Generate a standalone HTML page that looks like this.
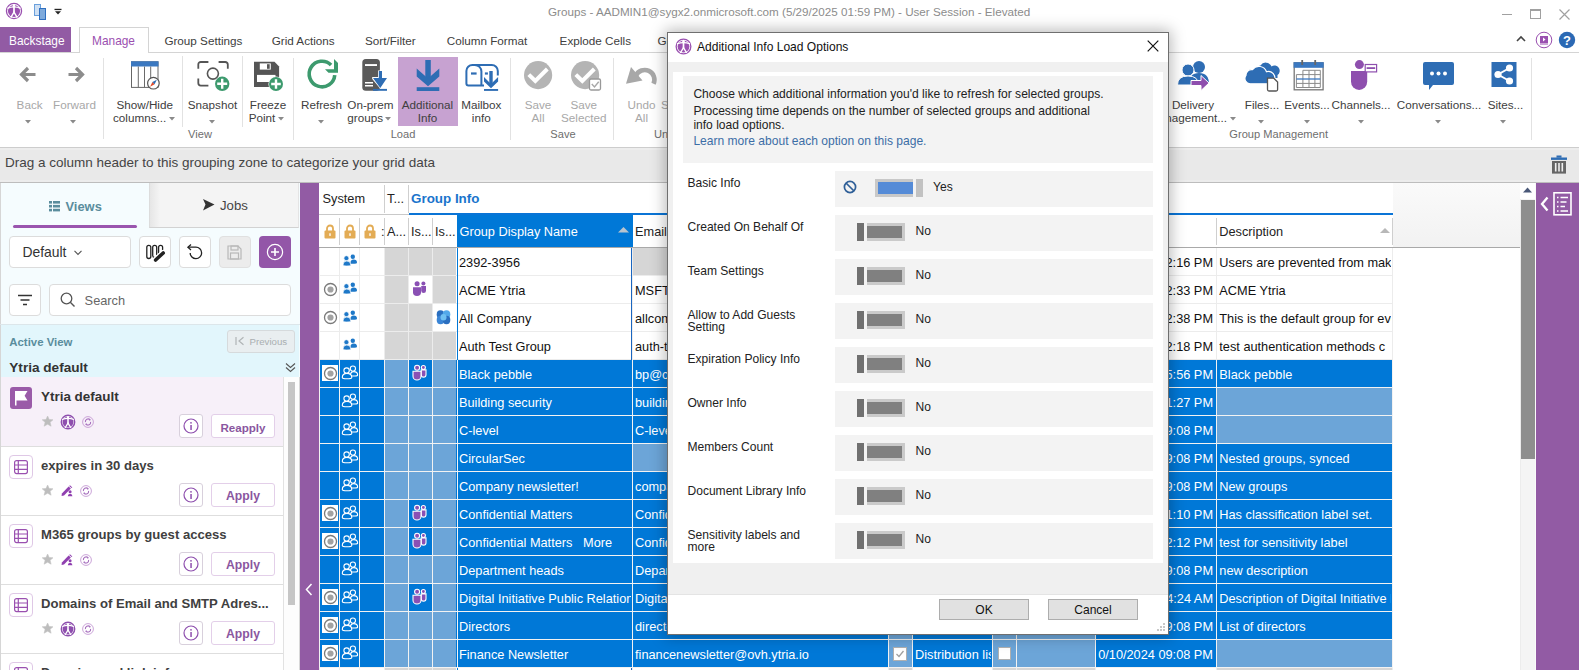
<!DOCTYPE html><html><head><meta charset="utf-8"><style>
html,body{margin:0;padding:0}
body{width:1579px;height:670px;overflow:hidden;position:relative;background:#fff;font-family:"Liberation Sans", sans-serif}
.t{position:absolute;white-space:nowrap;line-height:1}
.b{position:absolute;box-sizing:border-box}
svg.b{overflow:visible}
</style></head><body>
<svg class="b" style="left:5px;top:2px" width="18" height="18" viewBox="0 0 18 18"><circle cx="9" cy="9" r="7.55" fill="none" stroke="#9a50b0" stroke-width="1.3"/><circle cx="9" cy="9" r="6.05" fill="#9a50b0"/><path d="M9.00 2.34 L9.00 10.85" stroke="#fff" stroke-width="1.74"/><path d="M5.72 15.66 L9.00 10.23 L12.28 15.66" fill="none" stroke="#fff" stroke-width="1.43"/><path d="M2.34 6.33 Q9.00 3.67 15.66 6.33" fill="none" stroke="#fff" stroke-width="1.23"/><circle cx="9" cy="4.29" r="1.33" fill="#fff"/></svg>
<div class="b" style="left:34px;top:4px;width:7px;height:12px;background:#cfe0f3;border:1px solid #6aa0dc"></div>
<div class="b" style="left:39px;top:8px;width:7px;height:12px;background:#7eaadc;border:1.5px solid #2f6fbf"></div>
<svg class="b" style="left:54px;top:8px" width="8" height="7" viewBox="0 0 8 7"><rect x="0.5" y="0.8" width="7" height="1.3" fill="#222"/><path d="M1 3.3 L7 3.3 L4 6.5 Z" fill="#222"/></svg>
<div class="t" style="left:548.0px;top:6.00px;font-size:11.66px;color:#8c8c8c;font-weight:400;">Groups - AADMIN1@sygx2.onmicrosoft.com (5/29/2025 01:59 PM) - User Session - Elevated</div>
<div class="b" style="left:1502px;top:14px;width:10px;height:1px;background:#a0a0a0"></div>
<div class="b" style="left:1530px;top:9px;width:11px;height:10px;border:1px solid #a0a0a0;border-top-width:2px"></div>
<svg class="b" style="left:1559px;top:9px" width="11" height="11" viewBox="0 0 11 11"><path d="M0.5 0.5 L10.5 10.5 M10.5 0.5 L0.5 10.5" stroke="#a0a0a0" stroke-width="1.2"/></svg>
<svg class="b" style="left:1516px;top:35px" width="10" height="7" viewBox="0 0 10 7"><path d="M1 6 L5 2 L9 6" fill="none" stroke="#444" stroke-width="1.6"/></svg>
<svg class="b" style="left:1535px;top:31px" width="18" height="18" viewBox="0 0 18 18"><circle cx="9" cy="9" r="7.8" fill="none" stroke="#9a50b0" stroke-width="1"/><rect x="5" y="5" width="8" height="7" fill="#9a50b0"/><path d="M8 6.5 L10.5 8.5 L8 10.5Z" fill="#fff"/><rect x="5" y="12.5" width="8" height="1" fill="#9a50b0"/></svg>
<svg class="b" style="left:1558px;top:31px" width="18" height="18" viewBox="0 0 18 18"><circle cx="9" cy="9" r="8.2" fill="#2b69b4"/><text x="9" y="13.5" font-family="Liberation Sans" font-weight="700" font-size="13" fill="#fff" text-anchor="middle">?</text></svg>
<div class="b" style="left:0px;top:27px;width:71px;height:25px;background:#925ba4"></div>
<div class="t" style="left:9.0px;top:36.00px;font-size:11.9px;color:#ffffff;font-weight:400;">Backstage</div>
<div class="b" style="left:0px;top:52px;width:1579px;height:1px;background:#d4d4d4"></div>
<div class="b" style="left:79px;top:27px;width:70px;height:26px;background:#fff;border:1px solid #d4d4d4;border-bottom:none"></div>
<div class="t" style="left:92.0px;top:36.00px;font-size:11.9px;color:#9b4fb0;font-weight:400;">Manage</div>
<div class="t" style="left:164.4px;top:35.00px;font-size:11.7px;color:#404040;font-weight:400;">Group Settings</div>
<div class="t" style="left:271.7px;top:35.00px;font-size:11.7px;color:#404040;font-weight:400;">Grid Actions</div>
<div class="t" style="left:365.0px;top:35.00px;font-size:11.7px;color:#404040;font-weight:400;">Sort/Filter</div>
<div class="t" style="left:446.7px;top:35.00px;font-size:11.7px;color:#404040;font-weight:400;">Column Format</div>
<div class="t" style="left:559.6px;top:35.00px;font-size:11.7px;color:#404040;font-weight:400;">Explode Cells</div>
<div class="t" style="left:657.5px;top:35.00px;font-size:11.7px;color:#404040;font-weight:400;">Group Settings</div>
<div class="b" style="left:0px;top:147px;width:1579px;height:1px;background:#cdcdcd"></div>
<div class="b" style="left:103px;top:58px;width:1px;height:81px;background:#e2e2e2"></div>
<div class="b" style="left:182px;top:56px;width:1px;height:71px;background:#e2e2e2"></div>
<div class="b" style="left:242px;top:56px;width:1px;height:71px;background:#e2e2e2"></div>
<div class="b" style="left:293px;top:58px;width:1px;height:82px;background:#e2e2e2"></div>
<div class="b" style="left:510px;top:58px;width:1px;height:82px;background:#e2e2e2"></div>
<div class="b" style="left:613px;top:58px;width:1px;height:82px;background:#e2e2e2"></div>
<div class="b" style="left:1531px;top:58px;width:1px;height:82px;background:#e2e2e2"></div>
<svg class="b" style="left:19px;top:66px" width="18" height="17" viewBox="0 0 18 17"><path d="M9 2 L2.5 8.5 L9 15 M3 8.5 L16.5 8.5" fill="none" stroke="#8c8c8c" stroke-width="3.2" stroke-linejoin="miter"/></svg>
<svg class="b" style="left:67px;top:66px" width="18" height="17" viewBox="0 0 18 17"><path d="M9 2 L15.5 8.5 L9 15 M15 8.5 L1.5 8.5" fill="none" stroke="#8c8c8c" stroke-width="3.2"/></svg>
<div class="t" style="left:-10.4px;width:80px;text-align:center;top:99.00px;font-size:11.7px;color:#a8a8a8;font-weight:400;">Back</div>
<div class="t" style="left:34.5px;width:80px;text-align:center;top:99.00px;font-size:11.7px;color:#a8a8a8;font-weight:400;">Forward</div>
<svg class="b" style="left:25px;top:120px" width="6" height="4" viewBox="0 0 6 4"><path d="M0 0 L6 0 L3 3.5Z" fill="#8a8a8a"/></svg>
<svg class="b" style="left:70px;top:120px" width="6" height="4" viewBox="0 0 6 4"><path d="M0 0 L6 0 L3 3.5Z" fill="#8a8a8a"/></svg>
<svg class="b" style="left:130px;top:60px" width="32" height="32" viewBox="0 0 32 32"><rect x="1.5" y="1.8" width="26.5" height="25.6" fill="#fff" stroke="#666" stroke-width="1"/><rect x="1" y="1.3" width="27.5" height="5.2" fill="#3b78c0"/><path d="M8.3 6.5 V27.4 M14.5 6.5 V27.4 M20.7 6.5 V20" stroke="#6a6a6a" stroke-width="1"/><circle cx="23.4" cy="23.2" r="5.8" fill="#fff" stroke="#555" stroke-width="1.2"/><path d="M20.1 26.7 L22.4 22 L24.6 24.3Z" fill="#e04a2a"/><path d="M26.8 19.7 L24.6 24.3 L22.4 22Z" fill="#2e6db4"/></svg>
<div class="t" style="left:94.7px;width:100px;text-align:center;top:99.00px;font-size:11.7px;color:#404040;font-weight:400;">Show/Hide</div>
<div class="t" style="left:113.0px;top:112.00px;font-size:11.7px;color:#404040;font-weight:400;">columns...</div>
<svg class="b" style="left:169px;top:117px" width="6" height="4" viewBox="0 0 6 4"><path d="M0 0 L6 0 L3 3.5Z" fill="#8a8a8a"/></svg>
<svg class="b" style="left:197px;top:61px" width="33" height="33" viewBox="0 0 33 33"><path d="M1.3 7.8 V3.5 A2.5 2.5 0 0 1 3.8 1 H11.4 M21.6 1 H28.3 A2.5 2.5 0 0 1 30.8 3.5 V7.8 M1.3 17.4 V22.1 A2.5 2.5 0 0 0 3.8 24.6 H11.4" fill="none" stroke="#555" stroke-width="1.8"/><circle cx="15.9" cy="12.6" r="5.5" fill="none" stroke="#555" stroke-width="1.6"/><circle cx="25.2" cy="22.8" r="7.2" fill="#3d9a6e"/><path d="M25.2 17.8 V27.8 M20.2 22.8 H30.2" stroke="#fff" stroke-width="2.4"/></svg>
<div class="t" style="left:162.5px;width:100px;text-align:center;top:99.00px;font-size:11.7px;color:#404040;font-weight:400;">Snapshot</div>
<svg class="b" style="left:209px;top:120px" width="6" height="4" viewBox="0 0 6 4"><path d="M0 0 L6 0 L3 3.5Z" fill="#8a8a8a"/></svg>
<svg class="b" style="left:254px;top:61px" width="31" height="32" viewBox="0 0 31 32"><path d="M0 0.8 H20.5 L25.1 5.4 V25.9 H0Z" fill="#555"/><rect x="5.8" y="2.4" width="11" height="6.2" fill="#fff"/><rect x="13" y="3.2" width="2.7" height="4.6" fill="#555"/><rect x="3" y="13.9" width="18.5" height="7.1" fill="#fff"/><circle cx="22" cy="23" r="7.6" fill="#fff"/><circle cx="22" cy="23" r="7" fill="#3d9a6e"/><path d="M22 18.2 V27.8 M17.2 23 H26.8" stroke="#fff" stroke-width="2.4"/></svg>
<div class="t" style="left:228.0px;width:80px;text-align:center;top:99.00px;font-size:11.7px;color:#404040;font-weight:400;">Freeze</div>
<div class="t" style="left:248.7px;top:112.00px;font-size:11.7px;color:#404040;font-weight:400;">Point</div>
<svg class="b" style="left:278px;top:117px" width="6" height="4" viewBox="0 0 6 4"><path d="M0 0 L6 0 L3 3.5Z" fill="#8a8a8a"/></svg>
<svg class="b" style="left:306px;top:58px" width="34" height="34" viewBox="0 0 34 34"><path d="M28.75 17.1 A12.8 12.8 0 1 1 25.05 6.95" fill="none" stroke="#3d9a6e" stroke-width="3.6"/><path d="M28 1 L32 5 V14.8 H22.5 L19 11.3 H28Z" fill="#3d9a6e"/></svg>
<div class="t" style="left:281.5px;width:80px;text-align:center;top:99.00px;font-size:11.7px;color:#404040;font-weight:400;">Refresh</div>
<svg class="b" style="left:318px;top:120px" width="6" height="4" viewBox="0 0 6 4"><path d="M0 0 L6 0 L3 3.5Z" fill="#8a8a8a"/></svg>
<svg class="b" style="left:361px;top:58px" width="28" height="34" viewBox="0 0 28 34"><rect x="1.3" y="1" width="17.6" height="31.7" rx="3.5" fill="#5a5a5a"/><rect x="4" y="6.1" width="12" height="1.9" fill="#fff"/><rect x="4" y="24" width="8" height="1.5" fill="#fff"/><rect x="4" y="27" width="8" height="1.5" fill="#fff"/><path d="M17 12.5 H21.6 V19 H26.8 V21 L19.3 30.8 L11.2 21 V19 H17Z" fill="#fff"/><path d="M17.8 13 H21 V20 H26 L19.3 30 L12 20 H17.8Z" fill="#2e6db4"/><rect x="12" y="30.9" width="14" height="1.9" fill="#2e6db4"/></svg>
<div class="t" style="left:330.4px;width:80px;text-align:center;top:99.00px;font-size:11.7px;color:#404040;font-weight:400;">On-prem</div>
<div class="t" style="left:347.3px;top:112.00px;font-size:11.7px;color:#404040;font-weight:400;">groups</div>
<svg class="b" style="left:385px;top:117px" width="6" height="4" viewBox="0 0 6 4"><path d="M0 0 L6 0 L3 3.5Z" fill="#8a8a8a"/></svg>
<div class="b" style="left:398px;top:57px;width:60px;height:69px;background:#c7a2d1"></div>
<svg class="b" style="left:416px;top:60px" width="24" height="32" viewBox="0 0 24 32"><rect x="9.3" y="0" width="5.5" height="20" fill="#2e6db4"/><path d="M0.7 8.5 L12 18.5 L23.3 8.5 V16.5 L12 26.2 L0.7 16.5Z" fill="#2e6db4"/><rect x="0.7" y="27.2" width="22.6" height="3.8" fill="#2e6db4"/></svg>
<div class="t" style="left:387.5px;width:80px;text-align:center;top:99.00px;font-size:11.7px;color:#404040;font-weight:400;">Additional</div>
<div class="t" style="left:387.5px;width:80px;text-align:center;top:112.00px;font-size:11.7px;color:#404040;font-weight:400;">Info</div>
<svg class="b" style="left:465px;top:64px" width="34" height="28" viewBox="0 0 34 28"><path d="M19 21.6 H3.4 A2 2 0 0 1 1.4 19.6 V7 A6 6 0 0 1 7.4 1 H26.8 A6 6 0 0 1 32.8 7 V11.5" fill="none" stroke="#2e6db4" stroke-width="2"/><path d="M16.4 21.6 V7.5 A6.5 6.5 0 0 0 9.9 1" fill="none" stroke="#2e6db4" stroke-width="2"/><rect x="6" y="8.4" width="5.6" height="2.2" fill="#2e6db4"/><rect x="19.9" y="8.4" width="3" height="2.2" fill="#2e6db4"/><rect x="24.3" y="7" width="3.4" height="13" fill="#2e6db4"/><path d="M19 13 L26 20 L33.1 13 V17.5 L26 24.2 L19 17.5Z" fill="#2e6db4"/><rect x="19" y="25" width="14.1" height="1.9" fill="#2e6db4"/></svg>
<div class="t" style="left:441.3px;width:80px;text-align:center;top:99.00px;font-size:11.7px;color:#404040;font-weight:400;">Mailbox</div>
<div class="t" style="left:441.3px;width:80px;text-align:center;top:112.00px;font-size:11.7px;color:#404040;font-weight:400;">info</div>
<div class="t" style="left:363.0px;width:80px;text-align:center;top:129.00px;font-size:11.1px;color:#6e6e6e;font-weight:400;">Load</div>
<svg class="b" style="left:523px;top:60px" width="30" height="30" viewBox="0 0 30 30"><circle cx="15.1" cy="15.1" r="14.1" fill="#b4b4b4"/><path d="M5.8 14.6 L12.3 21 L24.3 9" fill="none" stroke="#fff" stroke-width="4"/></svg>
<div class="t" style="left:498.0px;width:80px;text-align:center;top:99.00px;font-size:11.7px;color:#a8a8a8;font-weight:400;">Save</div>
<div class="t" style="left:498.0px;width:80px;text-align:center;top:112.00px;font-size:11.7px;color:#a8a8a8;font-weight:400;">All</div>
<svg class="b" style="left:570px;top:60px" width="32" height="32" viewBox="0 0 32 32"><circle cx="15.1" cy="15.1" r="14.1" fill="#b4b4b4"/><path d="M5.8 14.6 L12.3 21 L24.3 9" fill="none" stroke="#fff" stroke-width="4"/><rect x="19.5" y="19" width="11" height="11" rx="1.5" fill="#fff" stroke="#999" stroke-width="1.3"/><path d="M21.8 24 L24.5 27 L28.7 21.8" fill="none" stroke="#a8a8a8" stroke-width="1.4"/></svg>
<div class="t" style="left:543.8px;width:80px;text-align:center;top:99.00px;font-size:11.7px;color:#a8a8a8;font-weight:400;">Save</div>
<div class="t" style="left:543.8px;width:80px;text-align:center;top:112.00px;font-size:11.7px;color:#a8a8a8;font-weight:400;">Selected</div>
<div class="t" style="left:523.0px;width:80px;text-align:center;top:129.00px;font-size:11.1px;color:#6e6e6e;font-weight:400;">Save</div>
<svg class="b" style="left:624px;top:63px" width="34" height="24" viewBox="0 0 34 24"><path d="M29.5 20.8 A9.3 9.3 0 0 0 12 12.5" fill="none" stroke="#a8a8a8" stroke-width="4.6"/><path d="M7 4 L2 20.8 L18.5 17.5Z" fill="#a8a8a8"/></svg>
<div class="t" style="left:601.5px;width:80px;text-align:center;top:99.00px;font-size:11.7px;color:#a8a8a8;font-weight:400;">Undo</div>
<div class="t" style="left:601.5px;width:80px;text-align:center;top:112.00px;font-size:11.7px;color:#a8a8a8;font-weight:400;">All</div>
<div class="t" style="left:654.0px;top:129.00px;font-size:11.1px;color:#6e6e6e;font-weight:400;">Undo</div>
<div class="t" style="left:661.0px;top:99.00px;font-size:11.7px;color:#a8a8a8;font-weight:400;">Save</div>
<svg class="b" style="left:1177px;top:60px" width="34" height="32" viewBox="0 0 34 32"><circle cx="22" cy="7" r="6" fill="#2e6db4"/><path d="M12 24 Q12 13 22 13 Q32 13 32 24Z" fill="#2e6db4"/><circle cx="11" cy="10" r="6" fill="#2e6db4" stroke="#fff" stroke-width="1"/><path d="M0.5 25 Q0.5 16 11 16 Q21.5 16 21.5 25Z" fill="#2e6db4" stroke="#fff" stroke-width="1"/><path d="M14 20.5 H24 V15.5 L32 23 L24 30.5 V25.5 H14Z" fill="#8e4fae" stroke="#fff" stroke-width="1"/></svg>
<div class="t" style="left:1153.0px;width:80px;text-align:center;top:99.00px;font-size:11.7px;color:#404040;font-weight:400;">Delivery</div>
<div class="t" style="left:1107.0px;width:120px;text-align:right;top:112.00px;font-size:11.7px;color:#404040;font-weight:400;">Management...</div>
<svg class="b" style="left:1230px;top:117px" width="6" height="4" viewBox="0 0 6 4"><path d="M0 0 L6 0 L3 3.5Z" fill="#8a8a8a"/></svg>
<svg class="b" style="left:1245px;top:61px" width="34" height="31" viewBox="0 0 34 31"><path d="M13 15 A5.8 5.8 0 0 1 15.5 4.5 A6.2 6.2 0 0 1 26.5 5.5 A5 5 0 0 1 32.5 14 V17 H13Z" fill="#2e6db4"/><path d="M5.5 22.8 A5.2 5.2 0 0 1 1 14.5 A5.5 5.5 0 0 1 7.5 8.7 A8 8 0 0 1 21.5 10.8 A6 6 0 0 1 25.5 22.8Z" fill="#2e6db4" stroke="#fff" stroke-width="1.2"/><path d="M22.5 17.2 H28.8 L32.6 21 V28.5 A1.5 1.5 0 0 1 31.1 30 H24 A1.5 1.5 0 0 1 22.5 28.5Z" fill="#fff" stroke="#555" stroke-width="1.3"/></svg>
<div class="t" style="left:1222.0px;width:80px;text-align:center;top:99.00px;font-size:11.7px;color:#404040;font-weight:400;">Files...</div>
<svg class="b" style="left:1258px;top:120px" width="6" height="4" viewBox="0 0 6 4"><path d="M0 0 L6 0 L3 3.5Z" fill="#8a8a8a"/></svg>
<svg class="b" style="left:1293px;top:59px" width="32" height="32" viewBox="0 0 32 32"><rect x="1.2" y="3.8" width="28.9" height="27" fill="#fff" stroke="#777" stroke-width="1.3"/><rect x="0.6" y="3.2" width="30.1" height="5.6" fill="#3b78c0"/><rect x="8.3" y="1" width="1.8" height="5" fill="#666"/><rect x="21.3" y="1" width="1.8" height="5" fill="#666"/><path d="M9.9 11.3 H27.3 M3.4 15.6 H27.3 M3.4 24.4 H27.3 M3.4 28.5 H27.3 M3.4 15.6 V28.5 M9.9 11.3 V28.5 M16 11.3 V28.5 M21.9 11.3 V28.5 M27.3 11.3 V28.5" fill="none" stroke="#8a8a8a" stroke-width="1"/><path d="M3.4 20 H27.3" stroke="#3b78c0" stroke-width="1.3"/></svg>
<div class="t" style="left:1267.0px;width:80px;text-align:center;top:99.00px;font-size:11.7px;color:#404040;font-weight:400;">Events...</div>
<svg class="b" style="left:1304px;top:120px" width="6" height="4" viewBox="0 0 6 4"><path d="M0 0 L6 0 L3 3.5Z" fill="#8a8a8a"/></svg>
<svg class="b" style="left:1350px;top:59px" width="28" height="32" viewBox="0 0 28 32"><circle cx="9.4" cy="5.6" r="4.5" fill="#8e4fae"/><path d="M1 12 H17.2 V22.7 A8.1 8.3 0 0 1 1 22.7Z" fill="#8e4fae"/><rect x="15.2" y="5.5" width="11.4" height="7.4" fill="#fff" stroke="#8e4fae" stroke-width="1.2"/><rect x="16.6" y="8.2" width="8.6" height="1.8" fill="#8e4fae"/></svg>
<div class="t" style="left:1321.0px;width:80px;text-align:center;top:99.00px;font-size:11.7px;color:#404040;font-weight:400;">Channels...</div>
<svg class="b" style="left:1358px;top:120px" width="6" height="4" viewBox="0 0 6 4"><path d="M0 0 L6 0 L3 3.5Z" fill="#8a8a8a"/></svg>
<svg class="b" style="left:1423px;top:62px" width="32" height="28" viewBox="0 0 32 28"><path d="M0 2 A2 2 0 0 1 2 0 H29 A2 2 0 0 1 31 2 V21 A2 2 0 0 1 29 23 H10 L6 28 V23 H2 A2 2 0 0 1 0 21Z" fill="#2e6db4"/><circle cx="9" cy="11.5" r="2" fill="#fff"/><circle cx="15.5" cy="11.5" r="2" fill="#fff"/><circle cx="22" cy="11.5" r="2" fill="#fff"/></svg>
<div class="t" style="left:1379.0px;width:120px;text-align:center;top:99.00px;font-size:11.7px;color:#404040;font-weight:400;">Conversations...</div>
<svg class="b" style="left:1435px;top:120px" width="6" height="4" viewBox="0 0 6 4"><path d="M0 0 L6 0 L3 3.5Z" fill="#8a8a8a"/></svg>
<svg class="b" style="left:1491px;top:62px" width="26" height="25" viewBox="0 0 26 25"><rect x="0.5" y="0" width="25" height="25" fill="#2e6db4"/><path d="M18.5 6 L7 12.5 L18.5 19" fill="none" stroke="#fff" stroke-width="2"/><circle cx="18.5" cy="6" r="3.6" fill="#fff"/><circle cx="7" cy="12.5" r="3.6" fill="#fff"/><circle cx="18.5" cy="19" r="3.6" fill="#fff"/></svg>
<div class="t" style="left:1465.5px;width:80px;text-align:center;top:99.00px;font-size:11.7px;color:#404040;font-weight:400;">Sites...</div>
<svg class="b" style="left:1500px;top:120px" width="6" height="4" viewBox="0 0 6 4"><path d="M0 0 L6 0 L3 3.5Z" fill="#8a8a8a"/></svg>
<div class="t" style="left:1208.7px;width:140px;text-align:center;top:129.00px;font-size:11.1px;color:#6e6e6e;font-weight:400;">Group Management</div>
<div class="t" style="left:160.0px;width:80px;text-align:center;top:129.00px;font-size:11.1px;color:#6e6e6e;font-weight:400;">View</div>
<div class="b" style="left:0px;top:148px;width:1579px;height:35px;background:#e9e9e9"></div>
<div class="b" style="left:0px;top:148px;width:1579px;height:2px;background:#ededed"></div>
<div class="b" style="left:0px;top:180px;width:1579px;height:2px;background:#ececec"></div>
<div class="b" style="left:0px;top:182px;width:1579px;height:1px;background:#bdbdbd"></div>
<div class="t" style="left:5.0px;top:156.00px;font-size:13.5px;color:#444;font-weight:400;">Drag a column header to this grouping zone to categorize your grid data</div>
<svg class="b" style="left:1551px;top:155px" width="17" height="19" viewBox="0 0 17 19"><rect x="5.5" y="0.5" width="5" height="2.2" fill="#2e6db4"/><rect x="0" y="2.5" width="16" height="2.4" fill="#2e6db4"/><path d="M1 6 H15 V18.6 H1Z" fill="#666"/><path d="M4.7 8 V16.5 M8 8 V16.5 M11.3 8 V16.5" stroke="#f0f0f0" stroke-width="1.6"/></svg>
<div class="b" style="left:0px;top:183px;width:300px;height:487px;background:#f5fcfe;border-left:1px solid #d6d6d6"></div>
<div class="b" style="left:149px;top:183px;width:150px;height:45px;background:linear-gradient(to right,#e6e6e6,#f4f4f4 10px);border-bottom:1px solid #d2d2d2;border-left:1px solid #dcdcdc;border-right:1px solid #e4e4e4"></div>
<div class="b" style="left:0px;top:183px;width:149px;height:45px;background:#f5fcfe;border-top-right-radius:5px;border-left:1px solid #d6d6d6"></div>
<svg class="b" style="left:49px;top:201px" width="12" height="11" viewBox="0 0 12 11"><rect x="0" y="0" width="3" height="2.6" fill="#5a8d9d"/><rect x="4" y="0" width="7" height="2.6" fill="#5a8d9d"/><rect x="0" y="3.9" width="3" height="2.6" fill="#5a8d9d"/><rect x="4" y="3.9" width="7" height="2.6" fill="#5a8d9d"/><rect x="0" y="7.8" width="3" height="2.6" fill="#5a8d9d"/><rect x="4" y="7.8" width="7" height="2.6" fill="#5a8d9d"/></svg>
<div class="t" style="left:65.5px;top:201.00px;font-size:12.9px;color:#5a8d9d;font-weight:700;">Views</div>
<div class="b" style="left:13px;top:225px;width:124px;height:3px;background:#9a55ae;border-radius:2px"></div>
<svg class="b" style="left:203px;top:199px" width="12" height="12" viewBox="0 0 12 12"><path d="M0 0 L11.5 5.5 L0 11.5 L2.5 5.5Z" fill="#333"/></svg>
<div class="t" style="left:220.0px;top:199.00px;font-size:13.2px;color:#444;font-weight:400;">Jobs</div>
<div class="b" style="left:9px;top:236px;width:122px;height:32px;background:#fff;border:1px solid #dcdcdc;border-radius:4px"></div>
<div class="t" style="left:22.4px;top:246.00px;font-size:13.9px;color:#333;font-weight:400;">Default</div>
<svg class="b" style="left:74px;top:250px" width="8" height="6" viewBox="0 0 8 6"><path d="M0.5 0.8 L4 4.5 L7.5 0.8" fill="none" stroke="#555" stroke-width="1.1"/></svg>
<div class="b" style="left:139px;top:236px;width:32px;height:32px;background:#fff;border:1px solid #dcdcdc;border-radius:4px"></div>
<svg class="b" style="left:139px;top:236px" width="32" height="32" viewBox="0 0 32 32"><rect x="7.8" y="9.3" width="4" height="13.2" rx="2" fill="none" stroke="#222" stroke-width="1.3"/><path d="M15.4 21.5 A2 2 0 0 1 13.7 19.5 V11.3 A2 2 0 0 1 17.7 11.3 V19" fill="none" stroke="#222" stroke-width="1.3"/><path d="M19.6 17.5 V11.3 A2 2 0 0 1 23.6 11.3 V15.5" fill="none" stroke="#222" stroke-width="1.3"/><path d="M16.5 24 L24.2 16.9" stroke="#fff" stroke-width="6" stroke-linecap="round"/><path d="M16.6 24 L24.2 17" stroke="#222" stroke-width="3.6" stroke-linecap="round"/></svg>
<div class="b" style="left:179px;top:236px;width:32px;height:32px;background:#fff;border:1px solid #dcdcdc;border-radius:4px"></div>
<svg class="b" style="left:179px;top:236px" width="32" height="32" viewBox="0 0 32 32"><path d="M11.2 16.9 A5.7 5.7 0 1 0 16.8 11.2 H9" fill="none" stroke="#222" stroke-width="1.3"/><path d="M12 8.4 L8.9 11.2 L12 14" fill="none" stroke="#222" stroke-width="1.3"/></svg>
<div class="b" style="left:219px;top:236px;width:32px;height:32px;background:#ececec;border:1px solid #e0e0e0;border-radius:4px"></div>
<svg class="b" style="left:227px;top:245px" width="16" height="15" viewBox="0 0 16 15"><path d="M1 1 H11 L14 4 V14 H1Z" fill="none" stroke="#b8b8b8" stroke-width="1.2"/><rect x="4" y="1" width="7" height="4" fill="none" stroke="#b8b8b8" stroke-width="1.2"/><rect x="3.5" y="8" width="8" height="6" fill="none" stroke="#b8b8b8" stroke-width="1.2"/></svg>
<div class="b" style="left:259px;top:236px;width:32px;height:32px;background:#9356a8;border-radius:4px"></div>
<svg class="b" style="left:266px;top:243px" width="18" height="18" viewBox="0 0 18 18"><circle cx="9" cy="9" r="7.6" fill="none" stroke="#fff" stroke-width="1.2"/><path d="M9 5 V13 M5 9 H13" stroke="#fff" stroke-width="1.6"/></svg>
<div class="b" style="left:9px;top:284px;width:32px;height:32px;background:#fff;border:1px solid #dcdcdc;border-radius:4px"></div>
<svg class="b" style="left:17px;top:294px" width="16" height="12" viewBox="0 0 16 12"><path d="M1 1.5 H15 M3.5 6 H12.5 M6 10.5 H10" stroke="#333" stroke-width="1.3"/></svg>
<div class="b" style="left:49px;top:284px;width:242px;height:32px;background:#fff;border:1px solid #dcdcdc;border-radius:4px"></div>
<svg class="b" style="left:60px;top:292px" width="16" height="16" viewBox="0 0 16 16"><circle cx="6.5" cy="6.5" r="5.3" fill="none" stroke="#555" stroke-width="1.3"/><path d="M10.3 10.3 L14.5 14.5" stroke="#555" stroke-width="1.4"/></svg>
<div class="t" style="left:84.6px;top:295.00px;font-size:12.8px;color:#666;font-weight:400;">Search</div>
<div class="b" style="left:0px;top:324px;width:300px;height:1px;background:#dce6ea"></div>
<div class="b" style="left:1px;top:325px;width:298px;height:52px;background:#e2f6fc"></div>
<div class="t" style="left:9.3px;top:337.00px;font-size:11.4px;color:#5a8d9d;font-weight:700;">Active View</div>
<div class="b" style="left:227px;top:330px;width:68px;height:23px;background:#e9eef0;border:1px solid #d6dadc;border-radius:3px"></div>
<svg class="b" style="left:235px;top:336px" width="10" height="10" viewBox="0 0 10 10"><path d="M1 1 V9" stroke="#b0b4b6" stroke-width="1.2"/><path d="M8.5 1.2 L4 5 L8.5 8.8" fill="none" stroke="#b0b4b6" stroke-width="1.2"/></svg>
<div class="t" style="left:249.5px;top:337.00px;font-size:9.7px;color:#a9aeb0;font-weight:400;">Previous</div>
<div class="t" style="left:9.3px;top:361.00px;font-size:13.6px;color:#333;font-weight:700;">Ytria default</div>
<svg class="b" style="left:285px;top:362px" width="11" height="11" viewBox="0 0 11 11"><path d="M1 1.5 L5.5 5.5 L10 1.5 M1 5.5 L5.5 9.5 L10 5.5" fill="none" stroke="#555" stroke-width="1.1"/></svg>
<div class="b" style="left:1px;top:377px;width:282px;height:293px;background:#fff"></div>
<div class="b" style="left:283px;top:377px;width:17px;height:293px;background:#fdfdfd;border-left:1px solid #e2e2e2;border-right:1px solid #d8d8d8"></div>
<div class="b" style="left:288px;top:382px;width:7px;height:223px;background:#c6c6c6"></div>
<div class="b" style="left:1px;top:377px;width:282px;height:69px;background:#f7f0f9"></div>
<div class="b" style="left:10px;top:387px;width:22px;height:22px;background:#9a5ba8;border-radius:3px"></div>
<svg class="b" style="left:10px;top:387px" width="22" height="22" viewBox="0 0 22 22"><path d="M5 4 H17.5 L14.6 8.7 L17.5 13.4 H6.5 V18.5 H5Z" fill="#fff"/></svg>
<div class="t" style="left:41.0px;top:390.00px;font-size:13.45px;color:#333;font-weight:700;">Ytria default</div>
<svg class="b" style="left:42px;top:416px" width="12" height="11" viewBox="0 0 12 11"><path d="M5.6 0 L7.2 3.5 L11 3.8 L8.1 6.3 L9.1 10.2 L5.6 8.2 L2.1 10.2 L3.1 6.3 L0.2 3.8 L4 3.5Z" fill="#bdbdbd" stroke="#c4c4c4" stroke-width="0.6" stroke-linejoin="round"/></svg>
<svg class="b" style="left:60px;top:414px" width="16" height="16" viewBox="0 0 16 16"><circle cx="8" cy="8" r="6.70" fill="none" stroke="#8e4fae" stroke-width="1.4"/><circle cx="8" cy="8" r="5.46" fill="#8e4fae"/><path d="M8.00 1.99 L8.00 9.66" stroke="#fff" stroke-width="1.57"/><path d="M5.04 14.01 L8.00 9.11 L10.96 14.01" fill="none" stroke="#fff" stroke-width="1.29"/><path d="M1.99 5.59 Q8.00 3.19 14.01 5.59" fill="none" stroke="#fff" stroke-width="1.11"/><circle cx="8" cy="3.75" r="1.20" fill="#fff"/></svg>
<svg class="b" style="left:82px;top:416px" width="12" height="12" viewBox="0 0 12 12"><circle cx="6" cy="6" r="5.4" fill="none" stroke="#c59bd4" stroke-width="0.9"/><path d="M3.4 6.2 A2.7 2.7 0 0 1 8 3.8" fill="none" stroke="#a872bf" stroke-width="1.1"/><path d="M8.6 5.8 A2.7 2.7 0 0 1 4 8.2" fill="none" stroke="#a872bf" stroke-width="1.1"/><path d="M7.2 2.6 L8.9 3.7 L7.5 5.1Z" fill="#a872bf"/><path d="M4.8 9.4 L3.1 8.3 L4.5 6.9Z" fill="#a872bf"/></svg>
<div class="b" style="left:179px;top:414px;width:24px;height:24px;background:#fff;border:1px solid #d8d0dc;border-radius:3px"></div>
<svg class="b" style="left:183px;top:418px" width="16" height="16" viewBox="0 0 16 16"><circle cx="8" cy="8" r="7" fill="none" stroke="#8e4fae" stroke-width="1.2"/><rect x="7.3" y="7" width="1.5" height="5" fill="#8e4fae"/><circle cx="8" cy="4.8" r="0.9" fill="#8e4fae"/></svg>
<div class="b" style="left:211px;top:414px;width:64px;height:24px;background:#fff;border:1px solid #e3cfe9;border-radius:3px"></div>
<div class="t" style="left:211.0px;width:64px;text-align:center;top:422.00px;font-size:11.6px;color:#8a56a0;font-weight:700;">Reapply</div>
<div class="b" style="left:1px;top:446px;width:282px;height:1px;background:#dedede"></div>
<div class="b" style="left:9px;top:455px;width:24px;height:24px;background:#fff;border:1px solid #dfc8e6;border-radius:4px"></div>
<svg class="b" style="left:14px;top:460px" width="14" height="14" viewBox="0 0 14 14"><rect x="0.6" y="0.6" width="12.8" height="13" rx="2" fill="none" stroke="#9a50b0" stroke-width="1.2"/><path d="M0.6 5 H13.4 M0.6 9.3 H13.4 M4.3 0.6 V13.6" stroke="#9a50b0" stroke-width="1.2"/></svg>
<div class="t" style="left:41.0px;top:459.00px;font-size:13.1px;color:#404040;font-weight:700;">expires in 30 days</div>
<svg class="b" style="left:42px;top:485px" width="12" height="11" viewBox="0 0 12 11"><path d="M5.6 0 L7.2 3.5 L11 3.8 L8.1 6.3 L9.1 10.2 L5.6 8.2 L2.1 10.2 L3.1 6.3 L0.2 3.8 L4 3.5Z" fill="#bdbdbd" stroke="#c4c4c4" stroke-width="0.6" stroke-linejoin="round"/></svg>
<svg class="b" style="left:60px;top:485px" width="13" height="12" viewBox="0 0 13 12"><path d="M1.6 11 L1.9 8.6 L8.6 1.6 L10.9 3.6 L4 10.6Z" fill="#9040b0"/><path d="M9.2 1 L10 0.3 L12.3 2.4 L11.5 3.1Z" fill="#9040b0"/><circle cx="10.1" cy="6.8" r="1.5" fill="#9040b0"/><path d="M7.8 11.3 Q7.8 8.8 10.1 8.8 Q12.4 8.8 12.4 11.3Z" fill="#9040b0"/></svg>
<svg class="b" style="left:80px;top:485px" width="12" height="12" viewBox="0 0 12 12"><circle cx="6" cy="6" r="5.4" fill="none" stroke="#c59bd4" stroke-width="0.9"/><path d="M3.4 6.2 A2.7 2.7 0 0 1 8 3.8" fill="none" stroke="#a872bf" stroke-width="1.1"/><path d="M8.6 5.8 A2.7 2.7 0 0 1 4 8.2" fill="none" stroke="#a872bf" stroke-width="1.1"/><path d="M7.2 2.6 L8.9 3.7 L7.5 5.1Z" fill="#a872bf"/><path d="M4.8 9.4 L3.1 8.3 L4.5 6.9Z" fill="#a872bf"/></svg>
<div class="b" style="left:179px;top:483px;width:24px;height:24px;background:#fff;border:1px solid #d8d0dc;border-radius:3px"></div>
<svg class="b" style="left:183px;top:487px" width="16" height="16" viewBox="0 0 16 16"><circle cx="8" cy="8" r="7" fill="none" stroke="#8e4fae" stroke-width="1.2"/><rect x="7.3" y="7" width="1.5" height="5" fill="#8e4fae"/><circle cx="8" cy="4.8" r="0.9" fill="#8e4fae"/></svg>
<div class="b" style="left:211px;top:483px;width:64px;height:24px;background:#fff;border:1px solid #e3cfe9;border-radius:3px"></div>
<div class="t" style="left:211.0px;width:64px;text-align:center;top:490.00px;font-size:12.2px;color:#8a56a0;font-weight:700;">Apply</div>
<div class="b" style="left:1px;top:515px;width:282px;height:1px;background:#dedede"></div>
<div class="b" style="left:9px;top:524px;width:24px;height:24px;background:#fff;border:1px solid #dfc8e6;border-radius:4px"></div>
<svg class="b" style="left:14px;top:529px" width="14" height="14" viewBox="0 0 14 14"><rect x="0.6" y="0.6" width="12.8" height="13" rx="2" fill="none" stroke="#9a50b0" stroke-width="1.2"/><path d="M0.6 5 H13.4 M0.6 9.3 H13.4 M4.3 0.6 V13.6" stroke="#9a50b0" stroke-width="1.2"/></svg>
<div class="t" style="left:41.0px;top:528.00px;font-size:13.1px;color:#404040;font-weight:700;">M365 groups by guest access</div>
<svg class="b" style="left:42px;top:554px" width="12" height="11" viewBox="0 0 12 11"><path d="M5.6 0 L7.2 3.5 L11 3.8 L8.1 6.3 L9.1 10.2 L5.6 8.2 L2.1 10.2 L3.1 6.3 L0.2 3.8 L4 3.5Z" fill="#bdbdbd" stroke="#c4c4c4" stroke-width="0.6" stroke-linejoin="round"/></svg>
<svg class="b" style="left:60px;top:554px" width="13" height="12" viewBox="0 0 13 12"><path d="M1.6 11 L1.9 8.6 L8.6 1.6 L10.9 3.6 L4 10.6Z" fill="#9040b0"/><path d="M9.2 1 L10 0.3 L12.3 2.4 L11.5 3.1Z" fill="#9040b0"/><circle cx="10.1" cy="6.8" r="1.5" fill="#9040b0"/><path d="M7.8 11.3 Q7.8 8.8 10.1 8.8 Q12.4 8.8 12.4 11.3Z" fill="#9040b0"/></svg>
<svg class="b" style="left:80px;top:554px" width="12" height="12" viewBox="0 0 12 12"><circle cx="6" cy="6" r="5.4" fill="none" stroke="#c59bd4" stroke-width="0.9"/><path d="M3.4 6.2 A2.7 2.7 0 0 1 8 3.8" fill="none" stroke="#a872bf" stroke-width="1.1"/><path d="M8.6 5.8 A2.7 2.7 0 0 1 4 8.2" fill="none" stroke="#a872bf" stroke-width="1.1"/><path d="M7.2 2.6 L8.9 3.7 L7.5 5.1Z" fill="#a872bf"/><path d="M4.8 9.4 L3.1 8.3 L4.5 6.9Z" fill="#a872bf"/></svg>
<div class="b" style="left:179px;top:552px;width:24px;height:24px;background:#fff;border:1px solid #d8d0dc;border-radius:3px"></div>
<svg class="b" style="left:183px;top:556px" width="16" height="16" viewBox="0 0 16 16"><circle cx="8" cy="8" r="7" fill="none" stroke="#8e4fae" stroke-width="1.2"/><rect x="7.3" y="7" width="1.5" height="5" fill="#8e4fae"/><circle cx="8" cy="4.8" r="0.9" fill="#8e4fae"/></svg>
<div class="b" style="left:211px;top:552px;width:64px;height:24px;background:#fff;border:1px solid #e3cfe9;border-radius:3px"></div>
<div class="t" style="left:211.0px;width:64px;text-align:center;top:559.00px;font-size:12.2px;color:#8a56a0;font-weight:700;">Apply</div>
<div class="b" style="left:1px;top:584px;width:282px;height:1px;background:#dedede"></div>
<div class="b" style="left:9px;top:593px;width:24px;height:24px;background:#fff;border:1px solid #dfc8e6;border-radius:4px"></div>
<svg class="b" style="left:14px;top:598px" width="14" height="14" viewBox="0 0 14 14"><rect x="0.6" y="0.6" width="12.8" height="13" rx="2" fill="none" stroke="#9a50b0" stroke-width="1.2"/><path d="M0.6 5 H13.4 M0.6 9.3 H13.4 M4.3 0.6 V13.6" stroke="#9a50b0" stroke-width="1.2"/></svg>
<div class="t" style="left:41.0px;top:597.00px;font-size:13.1px;color:#404040;font-weight:700;">Domains of Email and SMTP Adres...</div>
<svg class="b" style="left:42px;top:623px" width="12" height="11" viewBox="0 0 12 11"><path d="M5.6 0 L7.2 3.5 L11 3.8 L8.1 6.3 L9.1 10.2 L5.6 8.2 L2.1 10.2 L3.1 6.3 L0.2 3.8 L4 3.5Z" fill="#bdbdbd" stroke="#c4c4c4" stroke-width="0.6" stroke-linejoin="round"/></svg>
<svg class="b" style="left:60px;top:621px" width="16" height="16" viewBox="0 0 16 16"><circle cx="8" cy="8" r="6.70" fill="none" stroke="#8e4fae" stroke-width="1.4"/><circle cx="8" cy="8" r="5.46" fill="#8e4fae"/><path d="M8.00 1.99 L8.00 9.66" stroke="#fff" stroke-width="1.57"/><path d="M5.04 14.01 L8.00 9.11 L10.96 14.01" fill="none" stroke="#fff" stroke-width="1.29"/><path d="M1.99 5.59 Q8.00 3.19 14.01 5.59" fill="none" stroke="#fff" stroke-width="1.11"/><circle cx="8" cy="3.75" r="1.20" fill="#fff"/></svg>
<svg class="b" style="left:82px;top:623px" width="12" height="12" viewBox="0 0 12 12"><circle cx="6" cy="6" r="5.4" fill="none" stroke="#c59bd4" stroke-width="0.9"/><path d="M3.4 6.2 A2.7 2.7 0 0 1 8 3.8" fill="none" stroke="#a872bf" stroke-width="1.1"/><path d="M8.6 5.8 A2.7 2.7 0 0 1 4 8.2" fill="none" stroke="#a872bf" stroke-width="1.1"/><path d="M7.2 2.6 L8.9 3.7 L7.5 5.1Z" fill="#a872bf"/><path d="M4.8 9.4 L3.1 8.3 L4.5 6.9Z" fill="#a872bf"/></svg>
<div class="b" style="left:179px;top:621px;width:24px;height:24px;background:#fff;border:1px solid #d8d0dc;border-radius:3px"></div>
<svg class="b" style="left:183px;top:625px" width="16" height="16" viewBox="0 0 16 16"><circle cx="8" cy="8" r="7" fill="none" stroke="#8e4fae" stroke-width="1.2"/><rect x="7.3" y="7" width="1.5" height="5" fill="#8e4fae"/><circle cx="8" cy="4.8" r="0.9" fill="#8e4fae"/></svg>
<div class="b" style="left:211px;top:621px;width:64px;height:24px;background:#fff;border:1px solid #e3cfe9;border-radius:3px"></div>
<div class="t" style="left:211.0px;width:64px;text-align:center;top:628.00px;font-size:12.2px;color:#8a56a0;font-weight:700;">Apply</div>
<div class="b" style="left:1px;top:653px;width:282px;height:1px;background:#dedede"></div>
<div class="b" style="left:9px;top:662px;width:24px;height:24px;background:#fff;border:1px solid #dfc8e6;border-radius:4px"></div>
<svg class="b" style="left:14px;top:667px" width="14" height="14" viewBox="0 0 14 14"><rect x="0.6" y="0.6" width="12.8" height="13" rx="2" fill="none" stroke="#9a50b0" stroke-width="1.2"/><path d="M0.6 5 H13.4 M0.6 9.3 H13.4 M4.3 0.6 V13.6" stroke="#9a50b0" stroke-width="1.2"/></svg>
<div class="t" style="left:41.0px;top:666.00px;font-size:13.1px;color:#404040;font-weight:700;">Domains and link info</div>
<svg class="b" style="left:42px;top:692px" width="12" height="11" viewBox="0 0 12 11"><path d="M5.6 0 L7.2 3.5 L11 3.8 L8.1 6.3 L9.1 10.2 L5.6 8.2 L2.1 10.2 L3.1 6.3 L0.2 3.8 L4 3.5Z" fill="#bdbdbd" stroke="#c4c4c4" stroke-width="0.6" stroke-linejoin="round"/></svg>
<svg class="b" style="left:60px;top:690px" width="16" height="16" viewBox="0 0 16 16"><circle cx="8" cy="8" r="6.70" fill="none" stroke="#8e4fae" stroke-width="1.4"/><circle cx="8" cy="8" r="5.46" fill="#8e4fae"/><path d="M8.00 1.99 L8.00 9.66" stroke="#fff" stroke-width="1.57"/><path d="M5.04 14.01 L8.00 9.11 L10.96 14.01" fill="none" stroke="#fff" stroke-width="1.29"/><path d="M1.99 5.59 Q8.00 3.19 14.01 5.59" fill="none" stroke="#fff" stroke-width="1.11"/><circle cx="8" cy="3.75" r="1.20" fill="#fff"/></svg>
<svg class="b" style="left:82px;top:692px" width="12" height="12" viewBox="0 0 12 12"><circle cx="6" cy="6" r="5.4" fill="none" stroke="#c59bd4" stroke-width="0.9"/><path d="M3.4 6.2 A2.7 2.7 0 0 1 8 3.8" fill="none" stroke="#a872bf" stroke-width="1.1"/><path d="M8.6 5.8 A2.7 2.7 0 0 1 4 8.2" fill="none" stroke="#a872bf" stroke-width="1.1"/><path d="M7.2 2.6 L8.9 3.7 L7.5 5.1Z" fill="#a872bf"/><path d="M4.8 9.4 L3.1 8.3 L4.5 6.9Z" fill="#a872bf"/></svg>
<div class="b" style="left:179px;top:690px;width:24px;height:24px;background:#fff;border:1px solid #d8d0dc;border-radius:3px"></div>
<svg class="b" style="left:183px;top:694px" width="16" height="16" viewBox="0 0 16 16"><circle cx="8" cy="8" r="7" fill="none" stroke="#8e4fae" stroke-width="1.2"/><rect x="7.3" y="7" width="1.5" height="5" fill="#8e4fae"/><circle cx="8" cy="4.8" r="0.9" fill="#8e4fae"/></svg>
<div class="b" style="left:211px;top:690px;width:64px;height:24px;background:#fff;border:1px solid #e3cfe9;border-radius:3px"></div>
<div class="t" style="left:211.0px;width:64px;text-align:center;top:697.00px;font-size:12.2px;color:#8a56a0;font-weight:700;">Apply</div>
<div class="b" style="left:300px;top:183px;width:19px;height:487px;background:#925ba4"></div>
<svg class="b" style="left:305px;top:583px" width="8" height="13" viewBox="0 0 8 13"><path d="M6.5 1 L1.5 6.5 L6.5 12" fill="none" stroke="#fff" stroke-width="1.5"/></svg>
<div class="b" style="left:319px;top:183px;width:1201px;height:487px;background:#fff"></div>
<div class="b" style="left:319px;top:214px;width:1201px;height:1px;background:#c9c9c9"></div>
<div class="t" style="left:322.5px;top:193.00px;font-size:12.75px;color:#222;font-weight:400;">System</div>
<div class="b" style="left:384px;top:185px;width:1px;height:28px;background:#cfcfcf"></div>
<div class="t" style="left:387.0px;top:193.00px;font-size:12.75px;color:#222;font-weight:400;">T...</div>
<div class="b" style="left:408px;top:185px;width:1px;height:28px;background:#cfcfcf"></div>
<div class="t" style="left:411.0px;top:192.00px;font-size:13.4px;color:#1a74cc;font-weight:700;">Group Info</div>
<div class="b" style="left:409px;top:213px;width:984px;height:2px;background:#0a74d6"></div>
<div class="b" style="left:1393px;top:183px;width:127px;height:64px;background:linear-gradient(#fafafa,#f2f2f2)"></div>
<div class="b" style="left:319px;top:247px;width:1201px;height:1px;background:#a9a9a9"></div>
<div class="b" style="left:339px;top:218px;width:1px;height:27px;background:#cfcfcf"></div>
<div class="b" style="left:359px;top:218px;width:1px;height:27px;background:#cfcfcf"></div>
<div class="b" style="left:384px;top:218px;width:1px;height:27px;background:#cfcfcf"></div>
<div class="b" style="left:408px;top:218px;width:1px;height:27px;background:#cfcfcf"></div>
<div class="b" style="left:432px;top:218px;width:1px;height:27px;background:#cfcfcf"></div>
<div class="b" style="left:888px;top:218px;width:1px;height:27px;background:#cfcfcf"></div>
<div class="b" style="left:912px;top:218px;width:1px;height:27px;background:#cfcfcf"></div>
<div class="b" style="left:992px;top:218px;width:1px;height:27px;background:#cfcfcf"></div>
<div class="b" style="left:1016px;top:218px;width:1px;height:27px;background:#cfcfcf"></div>
<div class="b" style="left:1095px;top:218px;width:1px;height:27px;background:#cfcfcf"></div>
<div class="b" style="left:1216px;top:218px;width:1px;height:27px;background:#cfcfcf"></div>
<div class="b" style="left:1392px;top:218px;width:1px;height:27px;background:#cfcfcf"></div>
<svg class="b" style="left:324px;top:224px" width="12" height="15" viewBox="0 0 12 15"><path d="M3 7 V4.5 A3 3 0 0 1 9 4.5 V7" fill="none" stroke="#e3ac55" stroke-width="1.8"/><rect x="0.5" y="6.5" width="11" height="8" rx="1" fill="#e3ac55"/><rect x="5.3" y="9.3" width="1.4" height="2.6" fill="#fff"/></svg>
<svg class="b" style="left:344px;top:224px" width="12" height="15" viewBox="0 0 12 15"><path d="M3 7 V4.5 A3 3 0 0 1 9 4.5 V7" fill="none" stroke="#e3ac55" stroke-width="1.8"/><rect x="0.5" y="6.5" width="11" height="8" rx="1" fill="#e3ac55"/><rect x="5.3" y="9.3" width="1.4" height="2.6" fill="#fff"/></svg>
<svg class="b" style="left:364px;top:224px" width="12" height="15" viewBox="0 0 12 15"><path d="M3 7 V4.5 A3 3 0 0 1 9 4.5 V7" fill="none" stroke="#e3ac55" stroke-width="1.8"/><rect x="0.5" y="6.5" width="11" height="8" rx="1" fill="#e3ac55"/><rect x="5.3" y="9.3" width="1.4" height="2.6" fill="#fff"/></svg>
<div class="t" style="left:381.0px;top:226.00px;font-size:12.75px;color:#222;font-weight:400;">:</div>
<div class="t" style="left:387.0px;top:226.00px;font-size:12.75px;color:#222;font-weight:400;">A...</div>
<div class="t" style="left:411.0px;top:226.00px;font-size:12.75px;color:#222;font-weight:400;">Is...</div>
<div class="t" style="left:435.0px;top:226.00px;font-size:12.75px;color:#222;font-weight:400;">Is...</div>
<div class="b" style="left:457px;top:215px;width:176px;height:32px;background:#0078d7"></div>
<div class="t" style="left:459.5px;top:226.00px;font-size:12.75px;color:#fff;font-weight:400;">Group Display Name</div>
<svg class="b" style="left:618px;top:227px" width="11" height="6" viewBox="0 0 11 6"><path d="M0 5.5 L5.5 0 L11 5.5Z" fill="#b9c4cf"/></svg>
<div class="t" style="left:635.0px;top:226.00px;font-size:12.75px;color:#222;font-weight:400;">Email</div>
<div class="t" style="left:1219.3px;top:226.00px;font-size:12.75px;color:#222;font-weight:400;">Description</div>
<svg class="b" style="left:1380px;top:228px" width="10" height="5" viewBox="0 0 10 5"><path d="M0 5 L5 0 L10 5Z" fill="#b8b8b8"/></svg>
<div class="b" style="left:385px;top:248px;width:23px;height:27px;background:#d6d6d6"></div>
<div class="b" style="left:409px;top:248px;width:23px;height:27px;background:#d6d6d6"></div>
<div class="b" style="left:433px;top:248px;width:23px;height:27px;background:#d6d6d6"></div>
<div class="b" style="left:633px;top:248px;width:255px;height:27px;background:#d6d6d6"></div>
<div class="b" style="left:319px;top:275px;width:1074px;height:1px;background:#ececec"></div>
<div class="b" style="left:319px;top:248px;width:1px;height:28px;background:#ececec"></div>
<div class="b" style="left:339px;top:248px;width:1px;height:28px;background:#ececec"></div>
<div class="b" style="left:359px;top:248px;width:1px;height:28px;background:#ececec"></div>
<div class="b" style="left:384px;top:248px;width:1px;height:28px;background:#ececec"></div>
<div class="b" style="left:408px;top:248px;width:1px;height:28px;background:#ececec"></div>
<div class="b" style="left:432px;top:248px;width:1px;height:28px;background:#ececec"></div>
<div class="b" style="left:632px;top:248px;width:1px;height:28px;background:#ececec"></div>
<div class="b" style="left:888px;top:248px;width:1px;height:28px;background:#ececec"></div>
<div class="b" style="left:912px;top:248px;width:1px;height:28px;background:#ececec"></div>
<div class="b" style="left:992px;top:248px;width:1px;height:28px;background:#ececec"></div>
<div class="b" style="left:1016px;top:248px;width:1px;height:28px;background:#ececec"></div>
<div class="b" style="left:1095px;top:248px;width:1px;height:28px;background:#ececec"></div>
<div class="b" style="left:1216px;top:248px;width:1px;height:28px;background:#ececec"></div>
<div class="b" style="left:1392px;top:248px;width:1px;height:28px;background:#ececec"></div>
<div class="b" style="left:457px;top:248px;width:1px;height:28px;background:#0078d7"></div>
<div class="b" style="left:631px;top:248px;width:1px;height:28px;background:#1a66c0"></div>
<svg class="b" style="left:341px;top:252px" width="18" height="17" viewBox="0 0 18 17"><circle cx="11.8" cy="4.8" r="2.2" fill="#1e78c8"/><path d="M9.4 11.7 Q9.4 7.6 12.6 7.6 Q16 7.6 16 10.7 Q16 11.7 13.5 11.7Z" fill="#1e78c8"/><circle cx="5.4" cy="6.2" r="2.5" fill="#1e78c8" stroke="#fff" stroke-width="0.7"/><path d="M2 13 Q2 9 5.8 9 Q9.8 9 9.8 13 Q9.8 14 5.8 14 Q2 14 2 13Z" fill="#1e78c8" stroke="#fff" stroke-width="0.7"/></svg>
<div class="t" style="left:459px;top:257px;width:172px;overflow:hidden;font-size:12.75px;color:#111">2392-3956</div>
<div class="t" style="left:1097px;top:257px;width:116px;overflow:hidden;font-size:12.75px;color:#111;display:flex;justify-content:flex-end"><span>2:16 PM</span></div>
<div class="t" style="left:1219.3px;top:257px;width:172px;overflow:hidden;font-size:12.75px;color:#111">Users are prevented from making</div>
<div class="b" style="left:385px;top:276px;width:23px;height:27px;background:#d6d6d6"></div>
<div class="b" style="left:433px;top:276px;width:23px;height:27px;background:#d6d6d6"></div>
<div class="b" style="left:319px;top:303px;width:1074px;height:1px;background:#ececec"></div>
<div class="b" style="left:319px;top:276px;width:1px;height:28px;background:#ececec"></div>
<div class="b" style="left:339px;top:276px;width:1px;height:28px;background:#ececec"></div>
<div class="b" style="left:359px;top:276px;width:1px;height:28px;background:#ececec"></div>
<div class="b" style="left:384px;top:276px;width:1px;height:28px;background:#ececec"></div>
<div class="b" style="left:408px;top:276px;width:1px;height:28px;background:#ececec"></div>
<div class="b" style="left:432px;top:276px;width:1px;height:28px;background:#ececec"></div>
<div class="b" style="left:632px;top:276px;width:1px;height:28px;background:#ececec"></div>
<div class="b" style="left:888px;top:276px;width:1px;height:28px;background:#ececec"></div>
<div class="b" style="left:912px;top:276px;width:1px;height:28px;background:#ececec"></div>
<div class="b" style="left:992px;top:276px;width:1px;height:28px;background:#ececec"></div>
<div class="b" style="left:1016px;top:276px;width:1px;height:28px;background:#ececec"></div>
<div class="b" style="left:1095px;top:276px;width:1px;height:28px;background:#ececec"></div>
<div class="b" style="left:1216px;top:276px;width:1px;height:28px;background:#ececec"></div>
<div class="b" style="left:1392px;top:276px;width:1px;height:28px;background:#ececec"></div>
<div class="b" style="left:457px;top:276px;width:1px;height:28px;background:#0078d7"></div>
<div class="b" style="left:631px;top:276px;width:1px;height:28px;background:#1a66c0"></div>
<svg class="b" style="left:322.5px;top:281.5px" width="15" height="15" viewBox="0 0 15 15"><circle cx="7.5" cy="7.5" r="6" fill="none" stroke="#7a7a7a" stroke-width="1.3"/><circle cx="7.5" cy="7.5" r="3.1" fill="#a2a2a2"/></svg>
<svg class="b" style="left:341px;top:280px" width="18" height="17" viewBox="0 0 18 17"><circle cx="11.8" cy="4.8" r="2.2" fill="#1e78c8"/><path d="M9.4 11.7 Q9.4 7.6 12.6 7.6 Q16 7.6 16 10.7 Q16 11.7 13.5 11.7Z" fill="#1e78c8"/><circle cx="5.4" cy="6.2" r="2.5" fill="#1e78c8" stroke="#fff" stroke-width="0.7"/><path d="M2 13 Q2 9 5.8 9 Q9.8 9 9.8 13 Q9.8 14 5.8 14 Q2 14 2 13Z" fill="#1e78c8" stroke="#fff" stroke-width="0.7"/></svg>
<svg class="b" style="left:412px;top:280px" width="16" height="17" viewBox="0 0 16 17"><circle cx="11.4" cy="3.5" r="2" fill="#8a50b4" /><path d="M9.2 5.9 H14 V10.7 A2.4 2.4 0 0 1 9.2 10.7Z" fill="#8a50b4" /><circle cx="5.1" cy="3.7" r="2.5" fill="#8a50b4" /><path d="M1 7.2 H9 V12.2 A4 3.8 0 0 1 1 12.2Z" fill="#8a50b4" /></svg>
<div class="t" style="left:459px;top:285px;width:172px;overflow:hidden;font-size:12.75px;color:#111">ACME Ytria</div>
<div class="t" style="left:635px;top:285px;width:252px;overflow:hidden;font-size:12.75px;color:#111">MSFT.onmicrosoft</div>
<div class="t" style="left:1097px;top:285px;width:116px;overflow:hidden;font-size:12.75px;color:#111;display:flex;justify-content:flex-end"><span>2:33 PM</span></div>
<div class="t" style="left:1219.3px;top:285px;width:172px;overflow:hidden;font-size:12.75px;color:#111">ACME Ytria</div>
<div class="b" style="left:385px;top:304px;width:23px;height:27px;background:#d6d6d6"></div>
<div class="b" style="left:409px;top:304px;width:23px;height:27px;background:#d6d6d6"></div>
<div class="b" style="left:319px;top:331px;width:1074px;height:1px;background:#ececec"></div>
<div class="b" style="left:319px;top:304px;width:1px;height:28px;background:#ececec"></div>
<div class="b" style="left:339px;top:304px;width:1px;height:28px;background:#ececec"></div>
<div class="b" style="left:359px;top:304px;width:1px;height:28px;background:#ececec"></div>
<div class="b" style="left:384px;top:304px;width:1px;height:28px;background:#ececec"></div>
<div class="b" style="left:408px;top:304px;width:1px;height:28px;background:#ececec"></div>
<div class="b" style="left:432px;top:304px;width:1px;height:28px;background:#ececec"></div>
<div class="b" style="left:632px;top:304px;width:1px;height:28px;background:#ececec"></div>
<div class="b" style="left:888px;top:304px;width:1px;height:28px;background:#ececec"></div>
<div class="b" style="left:912px;top:304px;width:1px;height:28px;background:#ececec"></div>
<div class="b" style="left:992px;top:304px;width:1px;height:28px;background:#ececec"></div>
<div class="b" style="left:1016px;top:304px;width:1px;height:28px;background:#ececec"></div>
<div class="b" style="left:1095px;top:304px;width:1px;height:28px;background:#ececec"></div>
<div class="b" style="left:1216px;top:304px;width:1px;height:28px;background:#ececec"></div>
<div class="b" style="left:1392px;top:304px;width:1px;height:28px;background:#ececec"></div>
<div class="b" style="left:457px;top:304px;width:1px;height:28px;background:#0078d7"></div>
<div class="b" style="left:631px;top:304px;width:1px;height:28px;background:#1a66c0"></div>
<svg class="b" style="left:322.5px;top:309.5px" width="15" height="15" viewBox="0 0 15 15"><circle cx="7.5" cy="7.5" r="6" fill="none" stroke="#7a7a7a" stroke-width="1.3"/><circle cx="7.5" cy="7.5" r="3.1" fill="#a2a2a2"/></svg>
<svg class="b" style="left:341px;top:308px" width="18" height="17" viewBox="0 0 18 17"><circle cx="11.8" cy="4.8" r="2.2" fill="#1e78c8"/><path d="M9.4 11.7 Q9.4 7.6 12.6 7.6 Q16 7.6 16 10.7 Q16 11.7 13.5 11.7Z" fill="#1e78c8"/><circle cx="5.4" cy="6.2" r="2.5" fill="#1e78c8" stroke="#fff" stroke-width="0.7"/><path d="M2 13 Q2 9 5.8 9 Q9.8 9 9.8 13 Q9.8 14 5.8 14 Q2 14 2 13Z" fill="#1e78c8" stroke="#fff" stroke-width="0.7"/></svg>
<svg class="b" style="left:435.5px;top:310px" width="16" height="16" viewBox="0 0 16 16"><ellipse cx="4.5" cy="4.5" rx="3.8" ry="4.2" fill="#2a6fc0"/><ellipse cx="10.5" cy="4.5" rx="3.8" ry="4.2" fill="#52a8ea"/><ellipse cx="4.5" cy="10" rx="3.8" ry="4.2" fill="#3a85d6"/><ellipse cx="10.5" cy="10" rx="3.8" ry="4.2" fill="#2a6fc0"/><ellipse cx="7.5" cy="7.2" rx="3" ry="3.2" fill="#6fc0f2"/></svg>
<div class="t" style="left:459px;top:313px;width:172px;overflow:hidden;font-size:12.75px;color:#111">All Company</div>
<div class="t" style="left:635px;top:313px;width:252px;overflow:hidden;font-size:12.75px;color:#111">allcompany@</div>
<div class="t" style="left:1097px;top:313px;width:116px;overflow:hidden;font-size:12.75px;color:#111;display:flex;justify-content:flex-end"><span>2:38 PM</span></div>
<div class="t" style="left:1219.3px;top:313px;width:172px;overflow:hidden;font-size:12.75px;color:#111">This is the default group for everyone</div>
<div class="b" style="left:385px;top:332px;width:23px;height:27px;background:#d6d6d6"></div>
<div class="b" style="left:409px;top:332px;width:23px;height:27px;background:#d6d6d6"></div>
<div class="b" style="left:433px;top:332px;width:23px;height:27px;background:#d6d6d6"></div>
<div class="b" style="left:319px;top:359px;width:1074px;height:1px;background:#ececec"></div>
<div class="b" style="left:319px;top:332px;width:1px;height:28px;background:#ececec"></div>
<div class="b" style="left:339px;top:332px;width:1px;height:28px;background:#ececec"></div>
<div class="b" style="left:359px;top:332px;width:1px;height:28px;background:#ececec"></div>
<div class="b" style="left:384px;top:332px;width:1px;height:28px;background:#ececec"></div>
<div class="b" style="left:408px;top:332px;width:1px;height:28px;background:#ececec"></div>
<div class="b" style="left:432px;top:332px;width:1px;height:28px;background:#ececec"></div>
<div class="b" style="left:632px;top:332px;width:1px;height:28px;background:#ececec"></div>
<div class="b" style="left:888px;top:332px;width:1px;height:28px;background:#ececec"></div>
<div class="b" style="left:912px;top:332px;width:1px;height:28px;background:#ececec"></div>
<div class="b" style="left:992px;top:332px;width:1px;height:28px;background:#ececec"></div>
<div class="b" style="left:1016px;top:332px;width:1px;height:28px;background:#ececec"></div>
<div class="b" style="left:1095px;top:332px;width:1px;height:28px;background:#ececec"></div>
<div class="b" style="left:1216px;top:332px;width:1px;height:28px;background:#ececec"></div>
<div class="b" style="left:1392px;top:332px;width:1px;height:28px;background:#ececec"></div>
<div class="b" style="left:457px;top:332px;width:1px;height:28px;background:#0078d7"></div>
<div class="b" style="left:631px;top:332px;width:1px;height:28px;background:#1a66c0"></div>
<svg class="b" style="left:341px;top:336px" width="18" height="17" viewBox="0 0 18 17"><circle cx="11.8" cy="4.8" r="2.2" fill="#1e78c8"/><path d="M9.4 11.7 Q9.4 7.6 12.6 7.6 Q16 7.6 16 10.7 Q16 11.7 13.5 11.7Z" fill="#1e78c8"/><circle cx="5.4" cy="6.2" r="2.5" fill="#1e78c8" stroke="#fff" stroke-width="0.7"/><path d="M2 13 Q2 9 5.8 9 Q9.8 9 9.8 13 Q9.8 14 5.8 14 Q2 14 2 13Z" fill="#1e78c8" stroke="#fff" stroke-width="0.7"/></svg>
<div class="t" style="left:459px;top:341px;width:172px;overflow:hidden;font-size:12.75px;color:#111">Auth Test Group</div>
<div class="t" style="left:635px;top:341px;width:252px;overflow:hidden;font-size:12.75px;color:#111">auth-test</div>
<div class="t" style="left:1097px;top:341px;width:116px;overflow:hidden;font-size:12.75px;color:#111;display:flex;justify-content:flex-end"><span>2:18 PM</span></div>
<div class="t" style="left:1219.3px;top:341px;width:172px;overflow:hidden;font-size:12.75px;color:#111">test authentication methods c</div>
<div class="b" style="left:319px;top:360px;width:1074px;height:27px;background:#0078d7"></div>
<div class="b" style="left:385px;top:360px;width:23px;height:27px;background:#6ca5d8"></div>
<div class="b" style="left:433px;top:360px;width:23px;height:27px;background:#6ca5d8"></div>
<div class="b" style="left:889px;top:360px;width:23px;height:27px;background:#6ca5d8"></div>
<div class="b" style="left:993px;top:360px;width:23px;height:27px;background:#6ca5d8"></div>
<div class="b" style="left:1017px;top:360px;width:78px;height:27px;background:#6ca5d8"></div>
<div class="b" style="left:319px;top:387px;width:1074px;height:1px;background:#f2f2f2"></div>
<div class="b" style="left:319px;top:360px;width:1px;height:28px;background:#f2f2f2"></div>
<div class="b" style="left:339px;top:360px;width:1px;height:28px;background:#f2f2f2"></div>
<div class="b" style="left:359px;top:360px;width:1px;height:28px;background:#f2f2f2"></div>
<div class="b" style="left:384px;top:360px;width:1px;height:28px;background:#f2f2f2"></div>
<div class="b" style="left:408px;top:360px;width:1px;height:28px;background:#f2f2f2"></div>
<div class="b" style="left:432px;top:360px;width:1px;height:28px;background:#f2f2f2"></div>
<div class="b" style="left:632px;top:360px;width:1px;height:28px;background:#f2f2f2"></div>
<div class="b" style="left:888px;top:360px;width:1px;height:28px;background:#f2f2f2"></div>
<div class="b" style="left:912px;top:360px;width:1px;height:28px;background:#f2f2f2"></div>
<div class="b" style="left:992px;top:360px;width:1px;height:28px;background:#f2f2f2"></div>
<div class="b" style="left:1016px;top:360px;width:1px;height:28px;background:#f2f2f2"></div>
<div class="b" style="left:1095px;top:360px;width:1px;height:28px;background:#f2f2f2"></div>
<div class="b" style="left:1216px;top:360px;width:1px;height:28px;background:#f2f2f2"></div>
<div class="b" style="left:1392px;top:360px;width:1px;height:28px;background:#f2f2f2"></div>
<div class="b" style="left:457px;top:360px;width:1px;height:28px;background:#f2f2f2"></div>
<div class="b" style="left:632px;top:360px;width:1px;height:28px;background:#f2f2f2"></div>
<div class="b" style="left:322px;top:365.0px;width:16px;height:16px;background:#fff"></div>
<svg class="b" style="left:322.5px;top:365.5px" width="15" height="15" viewBox="0 0 15 15"><circle cx="7.5" cy="7.5" r="6" fill="none" stroke="#7a7a7a" stroke-width="1.3"/><circle cx="7.5" cy="7.5" r="3.1" fill="#a2a2a2"/></svg>
<svg class="b" style="left:341px;top:364px" width="18" height="17" viewBox="0 0 18 17"><circle cx="11.9" cy="4.6" r="2.6" fill="#0078d7" stroke="#fff" stroke-width="1.1"/><path d="M9.3 12 Q9.3 7.6 12.6 7.6 Q16.6 7.6 16.6 11 Q16.6 12 14 12Z" fill="#0078d7" stroke="#fff" stroke-width="1.1"/><circle cx="5.6" cy="6.6" r="2.7" fill="#0078d7" stroke="#fff" stroke-width="1.1"/><path d="M1.3 13.5 Q1.3 9.4 5.9 9.4 Q10.8 9.4 10.8 13.5 Q10.8 14.8 5.9 14.8 Q1.3 14.8 1.3 13.5Z" fill="#0078d7" stroke="#fff" stroke-width="1.1"/></svg>
<svg class="b" style="left:412px;top:364px" width="16" height="17" viewBox="0 0 16 17"><circle cx="11.4" cy="3.5" r="2" fill="#8a50b4" stroke="#fff" stroke-width="1.1"/><path d="M9.2 5.9 H14 V10.7 A2.4 2.4 0 0 1 9.2 10.7Z" fill="#8a50b4" stroke="#fff" stroke-width="1.1"/><circle cx="5.1" cy="3.7" r="2.5" fill="#8a50b4" stroke="#fff" stroke-width="1.1"/><path d="M1 7.2 H9 V12.2 A4 3.8 0 0 1 1 12.2Z" fill="#8a50b4" stroke="#fff" stroke-width="1.1"/></svg>
<div class="t" style="left:459px;top:369px;width:172px;overflow:hidden;font-size:12.75px;color:#fff">Black pebble</div>
<div class="t" style="left:635px;top:369px;width:252px;overflow:hidden;font-size:12.75px;color:#fff">bp@company</div>
<div class="t" style="left:1097px;top:369px;width:116px;overflow:hidden;font-size:12.75px;color:#fff;display:flex;justify-content:flex-end"><span>5:56 PM</span></div>
<div class="t" style="left:1219.3px;top:369px;width:172px;overflow:hidden;font-size:12.75px;color:#fff">Black pebble</div>
<div class="b" style="left:319px;top:388px;width:1074px;height:27px;background:#0078d7"></div>
<div class="b" style="left:385px;top:388px;width:23px;height:27px;background:#6ca5d8"></div>
<div class="b" style="left:433px;top:388px;width:23px;height:27px;background:#6ca5d8"></div>
<div class="b" style="left:409px;top:388px;width:23px;height:27px;background:#6ca5d8"></div>
<div class="b" style="left:889px;top:388px;width:23px;height:27px;background:#6ca5d8"></div>
<div class="b" style="left:993px;top:388px;width:23px;height:27px;background:#6ca5d8"></div>
<div class="b" style="left:1017px;top:388px;width:78px;height:27px;background:#6ca5d8"></div>
<div class="b" style="left:1217px;top:388px;width:175px;height:27px;background:#6ca5d8"></div>
<div class="b" style="left:319px;top:415px;width:1074px;height:1px;background:#f2f2f2"></div>
<div class="b" style="left:319px;top:388px;width:1px;height:28px;background:#f2f2f2"></div>
<div class="b" style="left:339px;top:388px;width:1px;height:28px;background:#f2f2f2"></div>
<div class="b" style="left:359px;top:388px;width:1px;height:28px;background:#f2f2f2"></div>
<div class="b" style="left:384px;top:388px;width:1px;height:28px;background:#f2f2f2"></div>
<div class="b" style="left:408px;top:388px;width:1px;height:28px;background:#f2f2f2"></div>
<div class="b" style="left:432px;top:388px;width:1px;height:28px;background:#f2f2f2"></div>
<div class="b" style="left:632px;top:388px;width:1px;height:28px;background:#f2f2f2"></div>
<div class="b" style="left:888px;top:388px;width:1px;height:28px;background:#f2f2f2"></div>
<div class="b" style="left:912px;top:388px;width:1px;height:28px;background:#f2f2f2"></div>
<div class="b" style="left:992px;top:388px;width:1px;height:28px;background:#f2f2f2"></div>
<div class="b" style="left:1016px;top:388px;width:1px;height:28px;background:#f2f2f2"></div>
<div class="b" style="left:1095px;top:388px;width:1px;height:28px;background:#f2f2f2"></div>
<div class="b" style="left:1216px;top:388px;width:1px;height:28px;background:#f2f2f2"></div>
<div class="b" style="left:1392px;top:388px;width:1px;height:28px;background:#f2f2f2"></div>
<div class="b" style="left:457px;top:388px;width:1px;height:28px;background:#f2f2f2"></div>
<div class="b" style="left:632px;top:388px;width:1px;height:28px;background:#f2f2f2"></div>
<svg class="b" style="left:341px;top:392px" width="18" height="17" viewBox="0 0 18 17"><circle cx="11.9" cy="4.6" r="2.6" fill="#0078d7" stroke="#fff" stroke-width="1.1"/><path d="M9.3 12 Q9.3 7.6 12.6 7.6 Q16.6 7.6 16.6 11 Q16.6 12 14 12Z" fill="#0078d7" stroke="#fff" stroke-width="1.1"/><circle cx="5.6" cy="6.6" r="2.7" fill="#0078d7" stroke="#fff" stroke-width="1.1"/><path d="M1.3 13.5 Q1.3 9.4 5.9 9.4 Q10.8 9.4 10.8 13.5 Q10.8 14.8 5.9 14.8 Q1.3 14.8 1.3 13.5Z" fill="#0078d7" stroke="#fff" stroke-width="1.1"/></svg>
<div class="t" style="left:459px;top:397px;width:172px;overflow:hidden;font-size:12.75px;color:#fff">Building security</div>
<div class="t" style="left:635px;top:397px;width:252px;overflow:hidden;font-size:12.75px;color:#fff">buildingsecurity</div>
<div class="t" style="left:1097px;top:397px;width:116px;overflow:hidden;font-size:12.75px;color:#fff;display:flex;justify-content:flex-end"><span>1:27 PM</span></div>
<div class="b" style="left:319px;top:416px;width:1074px;height:27px;background:#0078d7"></div>
<div class="b" style="left:385px;top:416px;width:23px;height:27px;background:#6ca5d8"></div>
<div class="b" style="left:433px;top:416px;width:23px;height:27px;background:#6ca5d8"></div>
<div class="b" style="left:409px;top:416px;width:23px;height:27px;background:#6ca5d8"></div>
<div class="b" style="left:889px;top:416px;width:23px;height:27px;background:#6ca5d8"></div>
<div class="b" style="left:993px;top:416px;width:23px;height:27px;background:#6ca5d8"></div>
<div class="b" style="left:1017px;top:416px;width:78px;height:27px;background:#6ca5d8"></div>
<div class="b" style="left:1217px;top:416px;width:175px;height:27px;background:#6ca5d8"></div>
<div class="b" style="left:319px;top:443px;width:1074px;height:1px;background:#f2f2f2"></div>
<div class="b" style="left:319px;top:416px;width:1px;height:28px;background:#f2f2f2"></div>
<div class="b" style="left:339px;top:416px;width:1px;height:28px;background:#f2f2f2"></div>
<div class="b" style="left:359px;top:416px;width:1px;height:28px;background:#f2f2f2"></div>
<div class="b" style="left:384px;top:416px;width:1px;height:28px;background:#f2f2f2"></div>
<div class="b" style="left:408px;top:416px;width:1px;height:28px;background:#f2f2f2"></div>
<div class="b" style="left:432px;top:416px;width:1px;height:28px;background:#f2f2f2"></div>
<div class="b" style="left:632px;top:416px;width:1px;height:28px;background:#f2f2f2"></div>
<div class="b" style="left:888px;top:416px;width:1px;height:28px;background:#f2f2f2"></div>
<div class="b" style="left:912px;top:416px;width:1px;height:28px;background:#f2f2f2"></div>
<div class="b" style="left:992px;top:416px;width:1px;height:28px;background:#f2f2f2"></div>
<div class="b" style="left:1016px;top:416px;width:1px;height:28px;background:#f2f2f2"></div>
<div class="b" style="left:1095px;top:416px;width:1px;height:28px;background:#f2f2f2"></div>
<div class="b" style="left:1216px;top:416px;width:1px;height:28px;background:#f2f2f2"></div>
<div class="b" style="left:1392px;top:416px;width:1px;height:28px;background:#f2f2f2"></div>
<div class="b" style="left:457px;top:416px;width:1px;height:28px;background:#f2f2f2"></div>
<div class="b" style="left:632px;top:416px;width:1px;height:28px;background:#f2f2f2"></div>
<svg class="b" style="left:341px;top:420px" width="18" height="17" viewBox="0 0 18 17"><circle cx="11.9" cy="4.6" r="2.6" fill="#0078d7" stroke="#fff" stroke-width="1.1"/><path d="M9.3 12 Q9.3 7.6 12.6 7.6 Q16.6 7.6 16.6 11 Q16.6 12 14 12Z" fill="#0078d7" stroke="#fff" stroke-width="1.1"/><circle cx="5.6" cy="6.6" r="2.7" fill="#0078d7" stroke="#fff" stroke-width="1.1"/><path d="M1.3 13.5 Q1.3 9.4 5.9 9.4 Q10.8 9.4 10.8 13.5 Q10.8 14.8 5.9 14.8 Q1.3 14.8 1.3 13.5Z" fill="#0078d7" stroke="#fff" stroke-width="1.1"/></svg>
<div class="t" style="left:459px;top:425px;width:172px;overflow:hidden;font-size:12.75px;color:#fff">C-level</div>
<div class="t" style="left:635px;top:425px;width:252px;overflow:hidden;font-size:12.75px;color:#fff">C-level@</div>
<div class="t" style="left:1097px;top:425px;width:116px;overflow:hidden;font-size:12.75px;color:#fff;display:flex;justify-content:flex-end"><span>9:08 PM</span></div>
<div class="b" style="left:319px;top:444px;width:1074px;height:27px;background:#0078d7"></div>
<div class="b" style="left:385px;top:444px;width:23px;height:27px;background:#6ca5d8"></div>
<div class="b" style="left:433px;top:444px;width:23px;height:27px;background:#6ca5d8"></div>
<div class="b" style="left:409px;top:444px;width:23px;height:27px;background:#6ca5d8"></div>
<div class="b" style="left:633px;top:444px;width:255px;height:27px;background:#6ca5d8"></div>
<div class="b" style="left:889px;top:444px;width:23px;height:27px;background:#6ca5d8"></div>
<div class="b" style="left:993px;top:444px;width:23px;height:27px;background:#6ca5d8"></div>
<div class="b" style="left:1017px;top:444px;width:78px;height:27px;background:#6ca5d8"></div>
<div class="b" style="left:319px;top:471px;width:1074px;height:1px;background:#f2f2f2"></div>
<div class="b" style="left:319px;top:444px;width:1px;height:28px;background:#f2f2f2"></div>
<div class="b" style="left:339px;top:444px;width:1px;height:28px;background:#f2f2f2"></div>
<div class="b" style="left:359px;top:444px;width:1px;height:28px;background:#f2f2f2"></div>
<div class="b" style="left:384px;top:444px;width:1px;height:28px;background:#f2f2f2"></div>
<div class="b" style="left:408px;top:444px;width:1px;height:28px;background:#f2f2f2"></div>
<div class="b" style="left:432px;top:444px;width:1px;height:28px;background:#f2f2f2"></div>
<div class="b" style="left:632px;top:444px;width:1px;height:28px;background:#f2f2f2"></div>
<div class="b" style="left:888px;top:444px;width:1px;height:28px;background:#f2f2f2"></div>
<div class="b" style="left:912px;top:444px;width:1px;height:28px;background:#f2f2f2"></div>
<div class="b" style="left:992px;top:444px;width:1px;height:28px;background:#f2f2f2"></div>
<div class="b" style="left:1016px;top:444px;width:1px;height:28px;background:#f2f2f2"></div>
<div class="b" style="left:1095px;top:444px;width:1px;height:28px;background:#f2f2f2"></div>
<div class="b" style="left:1216px;top:444px;width:1px;height:28px;background:#f2f2f2"></div>
<div class="b" style="left:1392px;top:444px;width:1px;height:28px;background:#f2f2f2"></div>
<div class="b" style="left:457px;top:444px;width:1px;height:28px;background:#f2f2f2"></div>
<div class="b" style="left:632px;top:444px;width:1px;height:28px;background:#f2f2f2"></div>
<svg class="b" style="left:341px;top:448px" width="18" height="17" viewBox="0 0 18 17"><circle cx="11.9" cy="4.6" r="2.6" fill="#0078d7" stroke="#fff" stroke-width="1.1"/><path d="M9.3 12 Q9.3 7.6 12.6 7.6 Q16.6 7.6 16.6 11 Q16.6 12 14 12Z" fill="#0078d7" stroke="#fff" stroke-width="1.1"/><circle cx="5.6" cy="6.6" r="2.7" fill="#0078d7" stroke="#fff" stroke-width="1.1"/><path d="M1.3 13.5 Q1.3 9.4 5.9 9.4 Q10.8 9.4 10.8 13.5 Q10.8 14.8 5.9 14.8 Q1.3 14.8 1.3 13.5Z" fill="#0078d7" stroke="#fff" stroke-width="1.1"/></svg>
<div class="t" style="left:459px;top:453px;width:172px;overflow:hidden;font-size:12.75px;color:#fff">CircularSec</div>
<div class="t" style="left:1097px;top:453px;width:116px;overflow:hidden;font-size:12.75px;color:#fff;display:flex;justify-content:flex-end"><span>9:08 PM</span></div>
<div class="t" style="left:1219.3px;top:453px;width:172px;overflow:hidden;font-size:12.75px;color:#fff">Nested groups, synced</div>
<div class="b" style="left:319px;top:472px;width:1074px;height:27px;background:#0078d7"></div>
<div class="b" style="left:385px;top:472px;width:23px;height:27px;background:#6ca5d8"></div>
<div class="b" style="left:433px;top:472px;width:23px;height:27px;background:#6ca5d8"></div>
<div class="b" style="left:409px;top:472px;width:23px;height:27px;background:#6ca5d8"></div>
<div class="b" style="left:889px;top:472px;width:23px;height:27px;background:#6ca5d8"></div>
<div class="b" style="left:993px;top:472px;width:23px;height:27px;background:#6ca5d8"></div>
<div class="b" style="left:1017px;top:472px;width:78px;height:27px;background:#6ca5d8"></div>
<div class="b" style="left:319px;top:499px;width:1074px;height:1px;background:#f2f2f2"></div>
<div class="b" style="left:319px;top:472px;width:1px;height:28px;background:#f2f2f2"></div>
<div class="b" style="left:339px;top:472px;width:1px;height:28px;background:#f2f2f2"></div>
<div class="b" style="left:359px;top:472px;width:1px;height:28px;background:#f2f2f2"></div>
<div class="b" style="left:384px;top:472px;width:1px;height:28px;background:#f2f2f2"></div>
<div class="b" style="left:408px;top:472px;width:1px;height:28px;background:#f2f2f2"></div>
<div class="b" style="left:432px;top:472px;width:1px;height:28px;background:#f2f2f2"></div>
<div class="b" style="left:632px;top:472px;width:1px;height:28px;background:#f2f2f2"></div>
<div class="b" style="left:888px;top:472px;width:1px;height:28px;background:#f2f2f2"></div>
<div class="b" style="left:912px;top:472px;width:1px;height:28px;background:#f2f2f2"></div>
<div class="b" style="left:992px;top:472px;width:1px;height:28px;background:#f2f2f2"></div>
<div class="b" style="left:1016px;top:472px;width:1px;height:28px;background:#f2f2f2"></div>
<div class="b" style="left:1095px;top:472px;width:1px;height:28px;background:#f2f2f2"></div>
<div class="b" style="left:1216px;top:472px;width:1px;height:28px;background:#f2f2f2"></div>
<div class="b" style="left:1392px;top:472px;width:1px;height:28px;background:#f2f2f2"></div>
<div class="b" style="left:457px;top:472px;width:1px;height:28px;background:#f2f2f2"></div>
<div class="b" style="left:632px;top:472px;width:1px;height:28px;background:#f2f2f2"></div>
<svg class="b" style="left:341px;top:476px" width="18" height="17" viewBox="0 0 18 17"><circle cx="11.9" cy="4.6" r="2.6" fill="#0078d7" stroke="#fff" stroke-width="1.1"/><path d="M9.3 12 Q9.3 7.6 12.6 7.6 Q16.6 7.6 16.6 11 Q16.6 12 14 12Z" fill="#0078d7" stroke="#fff" stroke-width="1.1"/><circle cx="5.6" cy="6.6" r="2.7" fill="#0078d7" stroke="#fff" stroke-width="1.1"/><path d="M1.3 13.5 Q1.3 9.4 5.9 9.4 Q10.8 9.4 10.8 13.5 Q10.8 14.8 5.9 14.8 Q1.3 14.8 1.3 13.5Z" fill="#0078d7" stroke="#fff" stroke-width="1.1"/></svg>
<div class="t" style="left:459px;top:481px;width:172px;overflow:hidden;font-size:12.75px;color:#fff">Company newsletter!</div>
<div class="t" style="left:635px;top:481px;width:252px;overflow:hidden;font-size:12.75px;color:#fff">company</div>
<div class="t" style="left:1097px;top:481px;width:116px;overflow:hidden;font-size:12.75px;color:#fff;display:flex;justify-content:flex-end"><span>9:08 PM</span></div>
<div class="t" style="left:1219.3px;top:481px;width:172px;overflow:hidden;font-size:12.75px;color:#fff">New groups</div>
<div class="b" style="left:319px;top:500px;width:1074px;height:27px;background:#0078d7"></div>
<div class="b" style="left:385px;top:500px;width:23px;height:27px;background:#6ca5d8"></div>
<div class="b" style="left:433px;top:500px;width:23px;height:27px;background:#6ca5d8"></div>
<div class="b" style="left:889px;top:500px;width:23px;height:27px;background:#6ca5d8"></div>
<div class="b" style="left:993px;top:500px;width:23px;height:27px;background:#6ca5d8"></div>
<div class="b" style="left:1017px;top:500px;width:78px;height:27px;background:#6ca5d8"></div>
<div class="b" style="left:319px;top:527px;width:1074px;height:1px;background:#f2f2f2"></div>
<div class="b" style="left:319px;top:500px;width:1px;height:28px;background:#f2f2f2"></div>
<div class="b" style="left:339px;top:500px;width:1px;height:28px;background:#f2f2f2"></div>
<div class="b" style="left:359px;top:500px;width:1px;height:28px;background:#f2f2f2"></div>
<div class="b" style="left:384px;top:500px;width:1px;height:28px;background:#f2f2f2"></div>
<div class="b" style="left:408px;top:500px;width:1px;height:28px;background:#f2f2f2"></div>
<div class="b" style="left:432px;top:500px;width:1px;height:28px;background:#f2f2f2"></div>
<div class="b" style="left:632px;top:500px;width:1px;height:28px;background:#f2f2f2"></div>
<div class="b" style="left:888px;top:500px;width:1px;height:28px;background:#f2f2f2"></div>
<div class="b" style="left:912px;top:500px;width:1px;height:28px;background:#f2f2f2"></div>
<div class="b" style="left:992px;top:500px;width:1px;height:28px;background:#f2f2f2"></div>
<div class="b" style="left:1016px;top:500px;width:1px;height:28px;background:#f2f2f2"></div>
<div class="b" style="left:1095px;top:500px;width:1px;height:28px;background:#f2f2f2"></div>
<div class="b" style="left:1216px;top:500px;width:1px;height:28px;background:#f2f2f2"></div>
<div class="b" style="left:1392px;top:500px;width:1px;height:28px;background:#f2f2f2"></div>
<div class="b" style="left:457px;top:500px;width:1px;height:28px;background:#f2f2f2"></div>
<div class="b" style="left:632px;top:500px;width:1px;height:28px;background:#f2f2f2"></div>
<div class="b" style="left:322px;top:505.0px;width:16px;height:16px;background:#fff"></div>
<svg class="b" style="left:322.5px;top:505.5px" width="15" height="15" viewBox="0 0 15 15"><circle cx="7.5" cy="7.5" r="6" fill="none" stroke="#7a7a7a" stroke-width="1.3"/><circle cx="7.5" cy="7.5" r="3.1" fill="#a2a2a2"/></svg>
<svg class="b" style="left:341px;top:504px" width="18" height="17" viewBox="0 0 18 17"><circle cx="11.9" cy="4.6" r="2.6" fill="#0078d7" stroke="#fff" stroke-width="1.1"/><path d="M9.3 12 Q9.3 7.6 12.6 7.6 Q16.6 7.6 16.6 11 Q16.6 12 14 12Z" fill="#0078d7" stroke="#fff" stroke-width="1.1"/><circle cx="5.6" cy="6.6" r="2.7" fill="#0078d7" stroke="#fff" stroke-width="1.1"/><path d="M1.3 13.5 Q1.3 9.4 5.9 9.4 Q10.8 9.4 10.8 13.5 Q10.8 14.8 5.9 14.8 Q1.3 14.8 1.3 13.5Z" fill="#0078d7" stroke="#fff" stroke-width="1.1"/></svg>
<svg class="b" style="left:412px;top:504px" width="16" height="17" viewBox="0 0 16 17"><circle cx="11.4" cy="3.5" r="2" fill="#8a50b4" stroke="#fff" stroke-width="1.1"/><path d="M9.2 5.9 H14 V10.7 A2.4 2.4 0 0 1 9.2 10.7Z" fill="#8a50b4" stroke="#fff" stroke-width="1.1"/><circle cx="5.1" cy="3.7" r="2.5" fill="#8a50b4" stroke="#fff" stroke-width="1.1"/><path d="M1 7.2 H9 V12.2 A4 3.8 0 0 1 1 12.2Z" fill="#8a50b4" stroke="#fff" stroke-width="1.1"/></svg>
<div class="t" style="left:459px;top:509px;width:172px;overflow:hidden;font-size:12.75px;color:#fff">Confidential Matters</div>
<div class="t" style="left:635px;top:509px;width:252px;overflow:hidden;font-size:12.75px;color:#fff">Confidential</div>
<div class="t" style="left:1097px;top:509px;width:116px;overflow:hidden;font-size:12.75px;color:#fff;display:flex;justify-content:flex-end"><span>1:10 PM</span></div>
<div class="t" style="left:1219.3px;top:509px;width:172px;overflow:hidden;font-size:12.75px;color:#fff">Has classification label set.</div>
<div class="b" style="left:319px;top:528px;width:1074px;height:27px;background:#0078d7"></div>
<div class="b" style="left:385px;top:528px;width:23px;height:27px;background:#6ca5d8"></div>
<div class="b" style="left:433px;top:528px;width:23px;height:27px;background:#6ca5d8"></div>
<div class="b" style="left:889px;top:528px;width:23px;height:27px;background:#6ca5d8"></div>
<div class="b" style="left:993px;top:528px;width:23px;height:27px;background:#6ca5d8"></div>
<div class="b" style="left:1017px;top:528px;width:78px;height:27px;background:#6ca5d8"></div>
<div class="b" style="left:319px;top:555px;width:1074px;height:1px;background:#f2f2f2"></div>
<div class="b" style="left:319px;top:528px;width:1px;height:28px;background:#f2f2f2"></div>
<div class="b" style="left:339px;top:528px;width:1px;height:28px;background:#f2f2f2"></div>
<div class="b" style="left:359px;top:528px;width:1px;height:28px;background:#f2f2f2"></div>
<div class="b" style="left:384px;top:528px;width:1px;height:28px;background:#f2f2f2"></div>
<div class="b" style="left:408px;top:528px;width:1px;height:28px;background:#f2f2f2"></div>
<div class="b" style="left:432px;top:528px;width:1px;height:28px;background:#f2f2f2"></div>
<div class="b" style="left:632px;top:528px;width:1px;height:28px;background:#f2f2f2"></div>
<div class="b" style="left:888px;top:528px;width:1px;height:28px;background:#f2f2f2"></div>
<div class="b" style="left:912px;top:528px;width:1px;height:28px;background:#f2f2f2"></div>
<div class="b" style="left:992px;top:528px;width:1px;height:28px;background:#f2f2f2"></div>
<div class="b" style="left:1016px;top:528px;width:1px;height:28px;background:#f2f2f2"></div>
<div class="b" style="left:1095px;top:528px;width:1px;height:28px;background:#f2f2f2"></div>
<div class="b" style="left:1216px;top:528px;width:1px;height:28px;background:#f2f2f2"></div>
<div class="b" style="left:1392px;top:528px;width:1px;height:28px;background:#f2f2f2"></div>
<div class="b" style="left:457px;top:528px;width:1px;height:28px;background:#f2f2f2"></div>
<div class="b" style="left:632px;top:528px;width:1px;height:28px;background:#f2f2f2"></div>
<div class="b" style="left:322px;top:533.0px;width:16px;height:16px;background:#fff"></div>
<svg class="b" style="left:322.5px;top:533.5px" width="15" height="15" viewBox="0 0 15 15"><circle cx="7.5" cy="7.5" r="6" fill="none" stroke="#7a7a7a" stroke-width="1.3"/><circle cx="7.5" cy="7.5" r="3.1" fill="#a2a2a2"/></svg>
<svg class="b" style="left:341px;top:532px" width="18" height="17" viewBox="0 0 18 17"><circle cx="11.9" cy="4.6" r="2.6" fill="#0078d7" stroke="#fff" stroke-width="1.1"/><path d="M9.3 12 Q9.3 7.6 12.6 7.6 Q16.6 7.6 16.6 11 Q16.6 12 14 12Z" fill="#0078d7" stroke="#fff" stroke-width="1.1"/><circle cx="5.6" cy="6.6" r="2.7" fill="#0078d7" stroke="#fff" stroke-width="1.1"/><path d="M1.3 13.5 Q1.3 9.4 5.9 9.4 Q10.8 9.4 10.8 13.5 Q10.8 14.8 5.9 14.8 Q1.3 14.8 1.3 13.5Z" fill="#0078d7" stroke="#fff" stroke-width="1.1"/></svg>
<svg class="b" style="left:412px;top:532px" width="16" height="17" viewBox="0 0 16 17"><circle cx="11.4" cy="3.5" r="2" fill="#8a50b4" stroke="#fff" stroke-width="1.1"/><path d="M9.2 5.9 H14 V10.7 A2.4 2.4 0 0 1 9.2 10.7Z" fill="#8a50b4" stroke="#fff" stroke-width="1.1"/><circle cx="5.1" cy="3.7" r="2.5" fill="#8a50b4" stroke="#fff" stroke-width="1.1"/><path d="M1 7.2 H9 V12.2 A4 3.8 0 0 1 1 12.2Z" fill="#8a50b4" stroke="#fff" stroke-width="1.1"/></svg>
<div class="t" style="left:459px;top:537px;width:172px;overflow:hidden;font-size:12.75px;color:#fff">Confidential Matters&nbsp;&nbsp;&nbsp;More</div>
<div class="t" style="left:635px;top:537px;width:252px;overflow:hidden;font-size:12.75px;color:#fff">Confidential</div>
<div class="t" style="left:1097px;top:537px;width:116px;overflow:hidden;font-size:12.75px;color:#fff;display:flex;justify-content:flex-end"><span>2:12 PM</span></div>
<div class="t" style="left:1219.3px;top:537px;width:172px;overflow:hidden;font-size:12.75px;color:#fff">test for sensitivity label</div>
<div class="b" style="left:319px;top:556px;width:1074px;height:27px;background:#0078d7"></div>
<div class="b" style="left:385px;top:556px;width:23px;height:27px;background:#6ca5d8"></div>
<div class="b" style="left:433px;top:556px;width:23px;height:27px;background:#6ca5d8"></div>
<div class="b" style="left:409px;top:556px;width:23px;height:27px;background:#6ca5d8"></div>
<div class="b" style="left:889px;top:556px;width:23px;height:27px;background:#6ca5d8"></div>
<div class="b" style="left:993px;top:556px;width:23px;height:27px;background:#6ca5d8"></div>
<div class="b" style="left:1017px;top:556px;width:78px;height:27px;background:#6ca5d8"></div>
<div class="b" style="left:319px;top:583px;width:1074px;height:1px;background:#f2f2f2"></div>
<div class="b" style="left:319px;top:556px;width:1px;height:28px;background:#f2f2f2"></div>
<div class="b" style="left:339px;top:556px;width:1px;height:28px;background:#f2f2f2"></div>
<div class="b" style="left:359px;top:556px;width:1px;height:28px;background:#f2f2f2"></div>
<div class="b" style="left:384px;top:556px;width:1px;height:28px;background:#f2f2f2"></div>
<div class="b" style="left:408px;top:556px;width:1px;height:28px;background:#f2f2f2"></div>
<div class="b" style="left:432px;top:556px;width:1px;height:28px;background:#f2f2f2"></div>
<div class="b" style="left:632px;top:556px;width:1px;height:28px;background:#f2f2f2"></div>
<div class="b" style="left:888px;top:556px;width:1px;height:28px;background:#f2f2f2"></div>
<div class="b" style="left:912px;top:556px;width:1px;height:28px;background:#f2f2f2"></div>
<div class="b" style="left:992px;top:556px;width:1px;height:28px;background:#f2f2f2"></div>
<div class="b" style="left:1016px;top:556px;width:1px;height:28px;background:#f2f2f2"></div>
<div class="b" style="left:1095px;top:556px;width:1px;height:28px;background:#f2f2f2"></div>
<div class="b" style="left:1216px;top:556px;width:1px;height:28px;background:#f2f2f2"></div>
<div class="b" style="left:1392px;top:556px;width:1px;height:28px;background:#f2f2f2"></div>
<div class="b" style="left:457px;top:556px;width:1px;height:28px;background:#f2f2f2"></div>
<div class="b" style="left:632px;top:556px;width:1px;height:28px;background:#f2f2f2"></div>
<svg class="b" style="left:341px;top:560px" width="18" height="17" viewBox="0 0 18 17"><circle cx="11.9" cy="4.6" r="2.6" fill="#0078d7" stroke="#fff" stroke-width="1.1"/><path d="M9.3 12 Q9.3 7.6 12.6 7.6 Q16.6 7.6 16.6 11 Q16.6 12 14 12Z" fill="#0078d7" stroke="#fff" stroke-width="1.1"/><circle cx="5.6" cy="6.6" r="2.7" fill="#0078d7" stroke="#fff" stroke-width="1.1"/><path d="M1.3 13.5 Q1.3 9.4 5.9 9.4 Q10.8 9.4 10.8 13.5 Q10.8 14.8 5.9 14.8 Q1.3 14.8 1.3 13.5Z" fill="#0078d7" stroke="#fff" stroke-width="1.1"/></svg>
<div class="t" style="left:459px;top:565px;width:172px;overflow:hidden;font-size:12.75px;color:#fff">Department heads</div>
<div class="t" style="left:635px;top:565px;width:252px;overflow:hidden;font-size:12.75px;color:#fff">Department</div>
<div class="t" style="left:1097px;top:565px;width:116px;overflow:hidden;font-size:12.75px;color:#fff;display:flex;justify-content:flex-end"><span>9:08 PM</span></div>
<div class="t" style="left:1219.3px;top:565px;width:172px;overflow:hidden;font-size:12.75px;color:#fff">new description</div>
<div class="b" style="left:319px;top:584px;width:1074px;height:27px;background:#0078d7"></div>
<div class="b" style="left:385px;top:584px;width:23px;height:27px;background:#6ca5d8"></div>
<div class="b" style="left:433px;top:584px;width:23px;height:27px;background:#6ca5d8"></div>
<div class="b" style="left:889px;top:584px;width:23px;height:27px;background:#6ca5d8"></div>
<div class="b" style="left:993px;top:584px;width:23px;height:27px;background:#6ca5d8"></div>
<div class="b" style="left:1017px;top:584px;width:78px;height:27px;background:#6ca5d8"></div>
<div class="b" style="left:319px;top:611px;width:1074px;height:1px;background:#f2f2f2"></div>
<div class="b" style="left:319px;top:584px;width:1px;height:28px;background:#f2f2f2"></div>
<div class="b" style="left:339px;top:584px;width:1px;height:28px;background:#f2f2f2"></div>
<div class="b" style="left:359px;top:584px;width:1px;height:28px;background:#f2f2f2"></div>
<div class="b" style="left:384px;top:584px;width:1px;height:28px;background:#f2f2f2"></div>
<div class="b" style="left:408px;top:584px;width:1px;height:28px;background:#f2f2f2"></div>
<div class="b" style="left:432px;top:584px;width:1px;height:28px;background:#f2f2f2"></div>
<div class="b" style="left:632px;top:584px;width:1px;height:28px;background:#f2f2f2"></div>
<div class="b" style="left:888px;top:584px;width:1px;height:28px;background:#f2f2f2"></div>
<div class="b" style="left:912px;top:584px;width:1px;height:28px;background:#f2f2f2"></div>
<div class="b" style="left:992px;top:584px;width:1px;height:28px;background:#f2f2f2"></div>
<div class="b" style="left:1016px;top:584px;width:1px;height:28px;background:#f2f2f2"></div>
<div class="b" style="left:1095px;top:584px;width:1px;height:28px;background:#f2f2f2"></div>
<div class="b" style="left:1216px;top:584px;width:1px;height:28px;background:#f2f2f2"></div>
<div class="b" style="left:1392px;top:584px;width:1px;height:28px;background:#f2f2f2"></div>
<div class="b" style="left:457px;top:584px;width:1px;height:28px;background:#f2f2f2"></div>
<div class="b" style="left:632px;top:584px;width:1px;height:28px;background:#f2f2f2"></div>
<div class="b" style="left:322px;top:589.0px;width:16px;height:16px;background:#fff"></div>
<svg class="b" style="left:322.5px;top:589.5px" width="15" height="15" viewBox="0 0 15 15"><circle cx="7.5" cy="7.5" r="6" fill="none" stroke="#7a7a7a" stroke-width="1.3"/><circle cx="7.5" cy="7.5" r="3.1" fill="#a2a2a2"/></svg>
<svg class="b" style="left:341px;top:588px" width="18" height="17" viewBox="0 0 18 17"><circle cx="11.9" cy="4.6" r="2.6" fill="#0078d7" stroke="#fff" stroke-width="1.1"/><path d="M9.3 12 Q9.3 7.6 12.6 7.6 Q16.6 7.6 16.6 11 Q16.6 12 14 12Z" fill="#0078d7" stroke="#fff" stroke-width="1.1"/><circle cx="5.6" cy="6.6" r="2.7" fill="#0078d7" stroke="#fff" stroke-width="1.1"/><path d="M1.3 13.5 Q1.3 9.4 5.9 9.4 Q10.8 9.4 10.8 13.5 Q10.8 14.8 5.9 14.8 Q1.3 14.8 1.3 13.5Z" fill="#0078d7" stroke="#fff" stroke-width="1.1"/></svg>
<svg class="b" style="left:412px;top:588px" width="16" height="17" viewBox="0 0 16 17"><circle cx="11.4" cy="3.5" r="2" fill="#8a50b4" stroke="#fff" stroke-width="1.1"/><path d="M9.2 5.9 H14 V10.7 A2.4 2.4 0 0 1 9.2 10.7Z" fill="#8a50b4" stroke="#fff" stroke-width="1.1"/><circle cx="5.1" cy="3.7" r="2.5" fill="#8a50b4" stroke="#fff" stroke-width="1.1"/><path d="M1 7.2 H9 V12.2 A4 3.8 0 0 1 1 12.2Z" fill="#8a50b4" stroke="#fff" stroke-width="1.1"/></svg>
<div class="t" style="left:459px;top:593px;width:172px;overflow:hidden;font-size:12.75px;color:#fff">Digital Initiative Public Relations</div>
<div class="t" style="left:635px;top:593px;width:252px;overflow:hidden;font-size:12.75px;color:#fff">Digital</div>
<div class="t" style="left:1097px;top:593px;width:116px;overflow:hidden;font-size:12.75px;color:#fff;display:flex;justify-content:flex-end"><span>4:24 AM</span></div>
<div class="t" style="left:1219.3px;top:593px;width:172px;overflow:hidden;font-size:12.75px;color:#fff">Description of Digital Initiative Public</div>
<div class="b" style="left:319px;top:612px;width:1074px;height:27px;background:#0078d7"></div>
<div class="b" style="left:385px;top:612px;width:23px;height:27px;background:#6ca5d8"></div>
<div class="b" style="left:433px;top:612px;width:23px;height:27px;background:#6ca5d8"></div>
<div class="b" style="left:409px;top:612px;width:23px;height:27px;background:#6ca5d8"></div>
<div class="b" style="left:889px;top:612px;width:23px;height:27px;background:#6ca5d8"></div>
<div class="b" style="left:993px;top:612px;width:23px;height:27px;background:#6ca5d8"></div>
<div class="b" style="left:1017px;top:612px;width:78px;height:27px;background:#6ca5d8"></div>
<div class="b" style="left:319px;top:639px;width:1074px;height:1px;background:#f2f2f2"></div>
<div class="b" style="left:319px;top:612px;width:1px;height:28px;background:#f2f2f2"></div>
<div class="b" style="left:339px;top:612px;width:1px;height:28px;background:#f2f2f2"></div>
<div class="b" style="left:359px;top:612px;width:1px;height:28px;background:#f2f2f2"></div>
<div class="b" style="left:384px;top:612px;width:1px;height:28px;background:#f2f2f2"></div>
<div class="b" style="left:408px;top:612px;width:1px;height:28px;background:#f2f2f2"></div>
<div class="b" style="left:432px;top:612px;width:1px;height:28px;background:#f2f2f2"></div>
<div class="b" style="left:632px;top:612px;width:1px;height:28px;background:#f2f2f2"></div>
<div class="b" style="left:888px;top:612px;width:1px;height:28px;background:#f2f2f2"></div>
<div class="b" style="left:912px;top:612px;width:1px;height:28px;background:#f2f2f2"></div>
<div class="b" style="left:992px;top:612px;width:1px;height:28px;background:#f2f2f2"></div>
<div class="b" style="left:1016px;top:612px;width:1px;height:28px;background:#f2f2f2"></div>
<div class="b" style="left:1095px;top:612px;width:1px;height:28px;background:#f2f2f2"></div>
<div class="b" style="left:1216px;top:612px;width:1px;height:28px;background:#f2f2f2"></div>
<div class="b" style="left:1392px;top:612px;width:1px;height:28px;background:#f2f2f2"></div>
<div class="b" style="left:457px;top:612px;width:1px;height:28px;background:#f2f2f2"></div>
<div class="b" style="left:632px;top:612px;width:1px;height:28px;background:#f2f2f2"></div>
<div class="b" style="left:322px;top:617.0px;width:16px;height:16px;background:#fff"></div>
<svg class="b" style="left:322.5px;top:617.5px" width="15" height="15" viewBox="0 0 15 15"><circle cx="7.5" cy="7.5" r="6" fill="none" stroke="#7a7a7a" stroke-width="1.3"/><circle cx="7.5" cy="7.5" r="3.1" fill="#a2a2a2"/></svg>
<svg class="b" style="left:341px;top:616px" width="18" height="17" viewBox="0 0 18 17"><circle cx="11.9" cy="4.6" r="2.6" fill="#0078d7" stroke="#fff" stroke-width="1.1"/><path d="M9.3 12 Q9.3 7.6 12.6 7.6 Q16.6 7.6 16.6 11 Q16.6 12 14 12Z" fill="#0078d7" stroke="#fff" stroke-width="1.1"/><circle cx="5.6" cy="6.6" r="2.7" fill="#0078d7" stroke="#fff" stroke-width="1.1"/><path d="M1.3 13.5 Q1.3 9.4 5.9 9.4 Q10.8 9.4 10.8 13.5 Q10.8 14.8 5.9 14.8 Q1.3 14.8 1.3 13.5Z" fill="#0078d7" stroke="#fff" stroke-width="1.1"/></svg>
<div class="t" style="left:459px;top:621px;width:172px;overflow:hidden;font-size:12.75px;color:#fff">Directors</div>
<div class="t" style="left:635px;top:621px;width:252px;overflow:hidden;font-size:12.75px;color:#fff">directors@</div>
<div class="t" style="left:1097px;top:621px;width:116px;overflow:hidden;font-size:12.75px;color:#fff;display:flex;justify-content:flex-end"><span>9:08 PM</span></div>
<div class="t" style="left:1219.3px;top:621px;width:172px;overflow:hidden;font-size:12.75px;color:#fff">List of directors</div>
<div class="b" style="left:319px;top:640px;width:1074px;height:27px;background:#0078d7"></div>
<div class="b" style="left:385px;top:640px;width:23px;height:27px;background:#6ca5d8"></div>
<div class="b" style="left:433px;top:640px;width:23px;height:27px;background:#6ca5d8"></div>
<div class="b" style="left:409px;top:640px;width:23px;height:27px;background:#6ca5d8"></div>
<div class="b" style="left:889px;top:640px;width:23px;height:27px;background:#6ca5d8"></div>
<div class="b" style="left:993px;top:640px;width:23px;height:27px;background:#6ca5d8"></div>
<div class="b" style="left:1017px;top:640px;width:78px;height:27px;background:#6ca5d8"></div>
<div class="b" style="left:1217px;top:640px;width:175px;height:27px;background:#6ca5d8"></div>
<div class="b" style="left:319px;top:667px;width:1074px;height:1px;background:#f2f2f2"></div>
<div class="b" style="left:319px;top:640px;width:1px;height:28px;background:#f2f2f2"></div>
<div class="b" style="left:339px;top:640px;width:1px;height:28px;background:#f2f2f2"></div>
<div class="b" style="left:359px;top:640px;width:1px;height:28px;background:#f2f2f2"></div>
<div class="b" style="left:384px;top:640px;width:1px;height:28px;background:#f2f2f2"></div>
<div class="b" style="left:408px;top:640px;width:1px;height:28px;background:#f2f2f2"></div>
<div class="b" style="left:432px;top:640px;width:1px;height:28px;background:#f2f2f2"></div>
<div class="b" style="left:632px;top:640px;width:1px;height:28px;background:#f2f2f2"></div>
<div class="b" style="left:888px;top:640px;width:1px;height:28px;background:#f2f2f2"></div>
<div class="b" style="left:912px;top:640px;width:1px;height:28px;background:#f2f2f2"></div>
<div class="b" style="left:992px;top:640px;width:1px;height:28px;background:#f2f2f2"></div>
<div class="b" style="left:1016px;top:640px;width:1px;height:28px;background:#f2f2f2"></div>
<div class="b" style="left:1095px;top:640px;width:1px;height:28px;background:#f2f2f2"></div>
<div class="b" style="left:1216px;top:640px;width:1px;height:28px;background:#f2f2f2"></div>
<div class="b" style="left:1392px;top:640px;width:1px;height:28px;background:#f2f2f2"></div>
<div class="b" style="left:457px;top:640px;width:1px;height:28px;background:#f2f2f2"></div>
<div class="b" style="left:632px;top:640px;width:1px;height:28px;background:#f2f2f2"></div>
<div class="b" style="left:322px;top:645.0px;width:16px;height:16px;background:#fff"></div>
<svg class="b" style="left:322.5px;top:645.5px" width="15" height="15" viewBox="0 0 15 15"><circle cx="7.5" cy="7.5" r="6" fill="none" stroke="#7a7a7a" stroke-width="1.3"/><circle cx="7.5" cy="7.5" r="3.1" fill="#a2a2a2"/></svg>
<svg class="b" style="left:341px;top:644px" width="18" height="17" viewBox="0 0 18 17"><circle cx="11.9" cy="4.6" r="2.6" fill="#0078d7" stroke="#fff" stroke-width="1.1"/><path d="M9.3 12 Q9.3 7.6 12.6 7.6 Q16.6 7.6 16.6 11 Q16.6 12 14 12Z" fill="#0078d7" stroke="#fff" stroke-width="1.1"/><circle cx="5.6" cy="6.6" r="2.7" fill="#0078d7" stroke="#fff" stroke-width="1.1"/><path d="M1.3 13.5 Q1.3 9.4 5.9 9.4 Q10.8 9.4 10.8 13.5 Q10.8 14.8 5.9 14.8 Q1.3 14.8 1.3 13.5Z" fill="#0078d7" stroke="#fff" stroke-width="1.1"/></svg>
<div class="t" style="left:459px;top:649px;width:172px;overflow:hidden;font-size:12.75px;color:#fff">Finance Newsletter</div>
<div class="t" style="left:635px;top:649px;width:252px;overflow:hidden;font-size:12.75px;color:#fff">financenewsletter@ovh.ytria.io</div>
<div class="b" style="left:893px;top:647px;width:14px;height:14px;background:#fff;border:1px solid #b0b0b0"></div>
<svg class="b" style="left:895px;top:649px" width="10" height="10" viewBox="0 0 10 10"><path d="M1.5 5 L4 7.5 L8.5 2" fill="none" stroke="#a0a0a0" stroke-width="1.3"/></svg>
<div class="t" style="left:915.0px;top:649.00px;font-size:12.75px;color:#fff;font-weight:400;width:76px;overflow:hidden">Distribution list</div>
<div class="b" style="left:998px;top:647px;width:13px;height:13px;background:#fff;border:1px solid #b0b0b0"></div>
<div class="t" style="left:1097px;top:649px;width:116px;overflow:hidden;font-size:12.75px;color:#fff;display:flex;justify-content:flex-end"><span>0/10/2024 09:08 PM</span></div>
<div class="b" style="left:385px;top:668px;width:23px;height:27px;background:#d6d6d6"></div>
<div class="b" style="left:409px;top:668px;width:23px;height:27px;background:#d6d6d6"></div>
<div class="b" style="left:433px;top:668px;width:23px;height:27px;background:#d6d6d6"></div>
<div class="b" style="left:889px;top:668px;width:23px;height:27px;background:#d6d6d6"></div>
<div class="b" style="left:993px;top:668px;width:23px;height:27px;background:#d6d6d6"></div>
<div class="b" style="left:1017px;top:668px;width:78px;height:27px;background:#d6d6d6"></div>
<div class="b" style="left:1217px;top:668px;width:175px;height:27px;background:#d6d6d6"></div>
<div class="b" style="left:319px;top:695px;width:1074px;height:1px;background:#ececec"></div>
<div class="b" style="left:319px;top:668px;width:1px;height:28px;background:#ececec"></div>
<div class="b" style="left:339px;top:668px;width:1px;height:28px;background:#ececec"></div>
<div class="b" style="left:359px;top:668px;width:1px;height:28px;background:#ececec"></div>
<div class="b" style="left:384px;top:668px;width:1px;height:28px;background:#ececec"></div>
<div class="b" style="left:408px;top:668px;width:1px;height:28px;background:#ececec"></div>
<div class="b" style="left:432px;top:668px;width:1px;height:28px;background:#ececec"></div>
<div class="b" style="left:632px;top:668px;width:1px;height:28px;background:#ececec"></div>
<div class="b" style="left:888px;top:668px;width:1px;height:28px;background:#ececec"></div>
<div class="b" style="left:912px;top:668px;width:1px;height:28px;background:#ececec"></div>
<div class="b" style="left:992px;top:668px;width:1px;height:28px;background:#ececec"></div>
<div class="b" style="left:1016px;top:668px;width:1px;height:28px;background:#ececec"></div>
<div class="b" style="left:1095px;top:668px;width:1px;height:28px;background:#ececec"></div>
<div class="b" style="left:1216px;top:668px;width:1px;height:28px;background:#ececec"></div>
<div class="b" style="left:1392px;top:668px;width:1px;height:28px;background:#ececec"></div>
<div class="b" style="left:457px;top:668px;width:1px;height:28px;background:#0078d7"></div>
<div class="b" style="left:631px;top:668px;width:1px;height:28px;background:#1a66c0"></div>
<svg class="b" style="left:341px;top:672px" width="18" height="17" viewBox="0 0 18 17"><circle cx="11.8" cy="4.8" r="2.2" fill="#1e78c8"/><path d="M9.4 11.7 Q9.4 7.6 12.6 7.6 Q16 7.6 16 10.7 Q16 11.7 13.5 11.7Z" fill="#1e78c8"/><circle cx="5.4" cy="6.2" r="2.5" fill="#1e78c8" stroke="#fff" stroke-width="0.7"/><path d="M2 13 Q2 9 5.8 9 Q9.8 9 9.8 13 Q9.8 14 5.8 14 Q2 14 2 13Z" fill="#1e78c8" stroke="#fff" stroke-width="0.7"/></svg>
<div class="t" style="left:459px;top:677px;width:172px;overflow:hidden;font-size:12.75px;color:#111"></div>
<div class="b" style="left:1520px;top:183px;width:16px;height:487px;background:#f4f4f4;border-left:1px solid #ececec;border-right:1px solid #fafafa"></div>
<div class="b" style="left:1520px;top:183px;width:15px;height:16px;background:#fff"></div>
<svg class="b" style="left:1523px;top:187px" width="9" height="6" viewBox="0 0 9 6"><path d="M0 5.5 L4.5 0.5 L9 5.5Z" fill="#4a5878"/></svg>
<div class="b" style="left:1521px;top:200px;width:14px;height:259px;background:#8e8e8e"></div>
<div class="b" style="left:1536px;top:183px;width:43px;height:487px;background:#925ba4"></div>
<svg class="b" style="left:1540px;top:192px" width="32" height="24" viewBox="0 0 32 24"><path d="M7.5 5.5 L2 12 L7.5 18.5" fill="none" stroke="#fff" stroke-width="2.3"/><rect x="14" y="0.8" width="17" height="22" fill="none" stroke="#fff" stroke-width="1.6"/><path d="M17 5.5 H18.5 M20.5 5.5 H28 M17 10 H18.5 M20.5 10 H26.5 M17 14.5 H18.5 M20.5 14.5 H25 M17 19 H18.5 M20.5 19 H28" stroke="#fff" stroke-width="1.4"/></svg>
<div class="b" style="left:667px;top:32px;width:502px;height:603px;background:#f0f0f0;border:1px solid #6f6f6f;box-shadow:0 0 14px 2px rgba(0,0,0,0.28)"></div>
<div class="b" style="left:668px;top:33px;width:500px;height:29px;background:#fff"></div>
<svg class="b" style="left:675px;top:38px" width="17" height="17" viewBox="0 0 17 17"><circle cx="8.5" cy="8.5" r="7.35" fill="none" stroke="#9a50b0" stroke-width="1.3"/><circle cx="8.5" cy="8.5" r="5.90" fill="#9a50b0"/><path d="M8.50 2.00 L8.50 10.30" stroke="#fff" stroke-width="1.70"/><path d="M5.30 15.00 L8.50 9.70 L11.70 15.00" fill="none" stroke="#fff" stroke-width="1.40"/><path d="M2.00 5.90 Q8.50 3.30 15.00 5.90" fill="none" stroke="#fff" stroke-width="1.20"/><circle cx="8.5" cy="3.90" r="1.30" fill="#fff"/></svg>
<div class="t" style="left:697.0px;top:41.00px;font-size:12.05px;color:#111;font-weight:400;">Additional Info Load Options</div>
<svg class="b" style="left:1147px;top:40px" width="12" height="12" viewBox="0 0 12 12"><path d="M0.7 0.7 L11.3 11.3 M11.3 0.7 L0.7 11.3" stroke="#111" stroke-width="1.2"/></svg>
<div class="b" style="left:673px;top:72px;width:490px;height:491px;background:#fff"></div>
<div class="b" style="left:683px;top:76px;width:470px;height:87px;background:#f3f3f3"></div>
<div class="t" style="left:693.4px;top:88.00px;font-size:12.05px;color:#222;font-weight:400;">Choose which additional information you&#39;d like to refresh for selected groups.</div>
<div class="t" style="left:693.4px;top:105.00px;font-size:12.05px;color:#222;font-weight:400;">Processing time depends on the number of selected groups and additional</div>
<div class="t" style="left:693.4px;top:119.00px;font-size:12.05px;color:#222;font-weight:400;">info load options.</div>
<div class="t" style="left:693.4px;top:135.00px;font-size:12.05px;color:#3c6ea6;font-weight:400;">Learn more about each option on this page.</div>
<div class="b" style="left:835px;top:171px;width:318px;height:36px;background:#f3f3f3"></div>
<div class="t" style="left:687.5px;top:177.00px;font-size:12.05px;color:#222;font-weight:400;">Basic Info</div>
<svg class="b" style="left:843px;top:180px" width="15" height="15" viewBox="0 0 15 15"><circle cx="7" cy="7" r="5.6" fill="none" stroke="#2f5f98" stroke-width="1.7"/><path d="M3 3 L11 11" stroke="#2f5f98" stroke-width="1.7"/></svg>
<div class="b" style="left:875px;top:179px;width:38px;height:18px;background:#c8c8c8"></div>
<div class="b" style="left:878px;top:182px;width:35px;height:12px;background:#558bd7"></div>
<div class="b" style="left:916px;top:179px;width:7px;height:18px;background:#c2c2c2"></div>
<div class="t" style="left:933.0px;top:181.00px;font-size:12.05px;color:#222;font-weight:400;">Yes</div>
<div class="b" style="left:835px;top:215px;width:318px;height:36px;background:#f3f3f3"></div>
<div class="t" style="left:687.5px;top:221.00px;font-size:12.05px;color:#222;font-weight:400;">Created On Behalf Of</div>
<div class="b" style="left:857px;top:223px;width:7px;height:18px;background:#707070"></div>
<div class="b" style="left:867px;top:223px;width:38px;height:18px;background:#cacaca"></div>
<div class="b" style="left:867px;top:226px;width:35px;height:12px;background:#808080"></div>
<div class="t" style="left:915.5px;top:225.00px;font-size:12.05px;color:#222;font-weight:400;">No</div>
<div class="b" style="left:835px;top:259px;width:318px;height:36px;background:#f3f3f3"></div>
<div class="t" style="left:687.5px;top:265.00px;font-size:12.05px;color:#222;font-weight:400;">Team Settings</div>
<div class="b" style="left:857px;top:267px;width:7px;height:18px;background:#707070"></div>
<div class="b" style="left:867px;top:267px;width:38px;height:18px;background:#cacaca"></div>
<div class="b" style="left:867px;top:270px;width:35px;height:12px;background:#808080"></div>
<div class="t" style="left:915.5px;top:269.00px;font-size:12.05px;color:#222;font-weight:400;">No</div>
<div class="b" style="left:835px;top:303px;width:318px;height:36px;background:#f3f3f3"></div>
<div class="t" style="left:687.5px;top:309.00px;font-size:12.05px;color:#222;font-weight:400;">Allow to Add Guests</div>
<div class="t" style="left:687.5px;top:321.00px;font-size:12.05px;color:#222;font-weight:400;">Setting</div>
<div class="b" style="left:857px;top:311px;width:7px;height:18px;background:#707070"></div>
<div class="b" style="left:867px;top:311px;width:38px;height:18px;background:#cacaca"></div>
<div class="b" style="left:867px;top:314px;width:35px;height:12px;background:#808080"></div>
<div class="t" style="left:915.5px;top:313.00px;font-size:12.05px;color:#222;font-weight:400;">No</div>
<div class="b" style="left:835px;top:347px;width:318px;height:36px;background:#f3f3f3"></div>
<div class="t" style="left:687.5px;top:353.00px;font-size:12.05px;color:#222;font-weight:400;">Expiration Policy Info</div>
<div class="b" style="left:857px;top:355px;width:7px;height:18px;background:#707070"></div>
<div class="b" style="left:867px;top:355px;width:38px;height:18px;background:#cacaca"></div>
<div class="b" style="left:867px;top:358px;width:35px;height:12px;background:#808080"></div>
<div class="t" style="left:915.5px;top:357.00px;font-size:12.05px;color:#222;font-weight:400;">No</div>
<div class="b" style="left:835px;top:391px;width:318px;height:36px;background:#f3f3f3"></div>
<div class="t" style="left:687.5px;top:397.00px;font-size:12.05px;color:#222;font-weight:400;">Owner Info</div>
<div class="b" style="left:857px;top:399px;width:7px;height:18px;background:#707070"></div>
<div class="b" style="left:867px;top:399px;width:38px;height:18px;background:#cacaca"></div>
<div class="b" style="left:867px;top:402px;width:35px;height:12px;background:#808080"></div>
<div class="t" style="left:915.5px;top:401.00px;font-size:12.05px;color:#222;font-weight:400;">No</div>
<div class="b" style="left:835px;top:435px;width:318px;height:36px;background:#f3f3f3"></div>
<div class="t" style="left:687.5px;top:441.00px;font-size:12.05px;color:#222;font-weight:400;">Members Count</div>
<div class="b" style="left:857px;top:443px;width:7px;height:18px;background:#707070"></div>
<div class="b" style="left:867px;top:443px;width:38px;height:18px;background:#cacaca"></div>
<div class="b" style="left:867px;top:446px;width:35px;height:12px;background:#808080"></div>
<div class="t" style="left:915.5px;top:445.00px;font-size:12.05px;color:#222;font-weight:400;">No</div>
<div class="b" style="left:835px;top:479px;width:318px;height:36px;background:#f3f3f3"></div>
<div class="t" style="left:687.5px;top:485.00px;font-size:12.05px;color:#222;font-weight:400;">Document Library Info</div>
<div class="b" style="left:857px;top:487px;width:7px;height:18px;background:#707070"></div>
<div class="b" style="left:867px;top:487px;width:38px;height:18px;background:#cacaca"></div>
<div class="b" style="left:867px;top:490px;width:35px;height:12px;background:#808080"></div>
<div class="t" style="left:915.5px;top:489.00px;font-size:12.05px;color:#222;font-weight:400;">No</div>
<div class="b" style="left:835px;top:523px;width:318px;height:36px;background:#f3f3f3"></div>
<div class="t" style="left:687.5px;top:529.00px;font-size:12.05px;color:#222;font-weight:400;">Sensitivity labels and</div>
<div class="t" style="left:687.5px;top:541.00px;font-size:12.05px;color:#222;font-weight:400;">more</div>
<div class="b" style="left:857px;top:531px;width:7px;height:18px;background:#707070"></div>
<div class="b" style="left:867px;top:531px;width:38px;height:18px;background:#cacaca"></div>
<div class="b" style="left:867px;top:534px;width:35px;height:12px;background:#808080"></div>
<div class="t" style="left:915.5px;top:533.00px;font-size:12.05px;color:#222;font-weight:400;">No</div>
<div class="b" style="left:668px;top:594px;width:500px;height:40px;background:#fff;border-top:1px solid #e4e4e4"></div>
<div class="b" style="left:939px;top:599px;width:90px;height:21px;background:#e1e1e1;border:1px solid #adadad"></div>
<div class="t" style="left:939.0px;width:90px;text-align:center;top:604.00px;font-size:12.05px;color:#111;font-weight:400;">OK</div>
<div class="b" style="left:1048px;top:599px;width:90px;height:21px;background:#e1e1e1;border:1px solid #adadad"></div>
<div class="t" style="left:1048.0px;width:90px;text-align:center;top:604.00px;font-size:12.05px;color:#111;font-weight:400;">Cancel</div>
<svg class="b" style="left:1156px;top:622px" width="10" height="10" viewBox="0 0 10 10"><rect x="7" y="1" width="2" height="2" fill="#c8c8c8"/><rect x="4" y="4" width="2" height="2" fill="#c8c8c8"/><rect x="7" y="4" width="2" height="2" fill="#c8c8c8"/><rect x="1" y="7" width="2" height="2" fill="#c8c8c8"/><rect x="4" y="7" width="2" height="2" fill="#c8c8c8"/><rect x="7" y="7" width="2" height="2" fill="#c8c8c8"/></svg>
</body></html>
